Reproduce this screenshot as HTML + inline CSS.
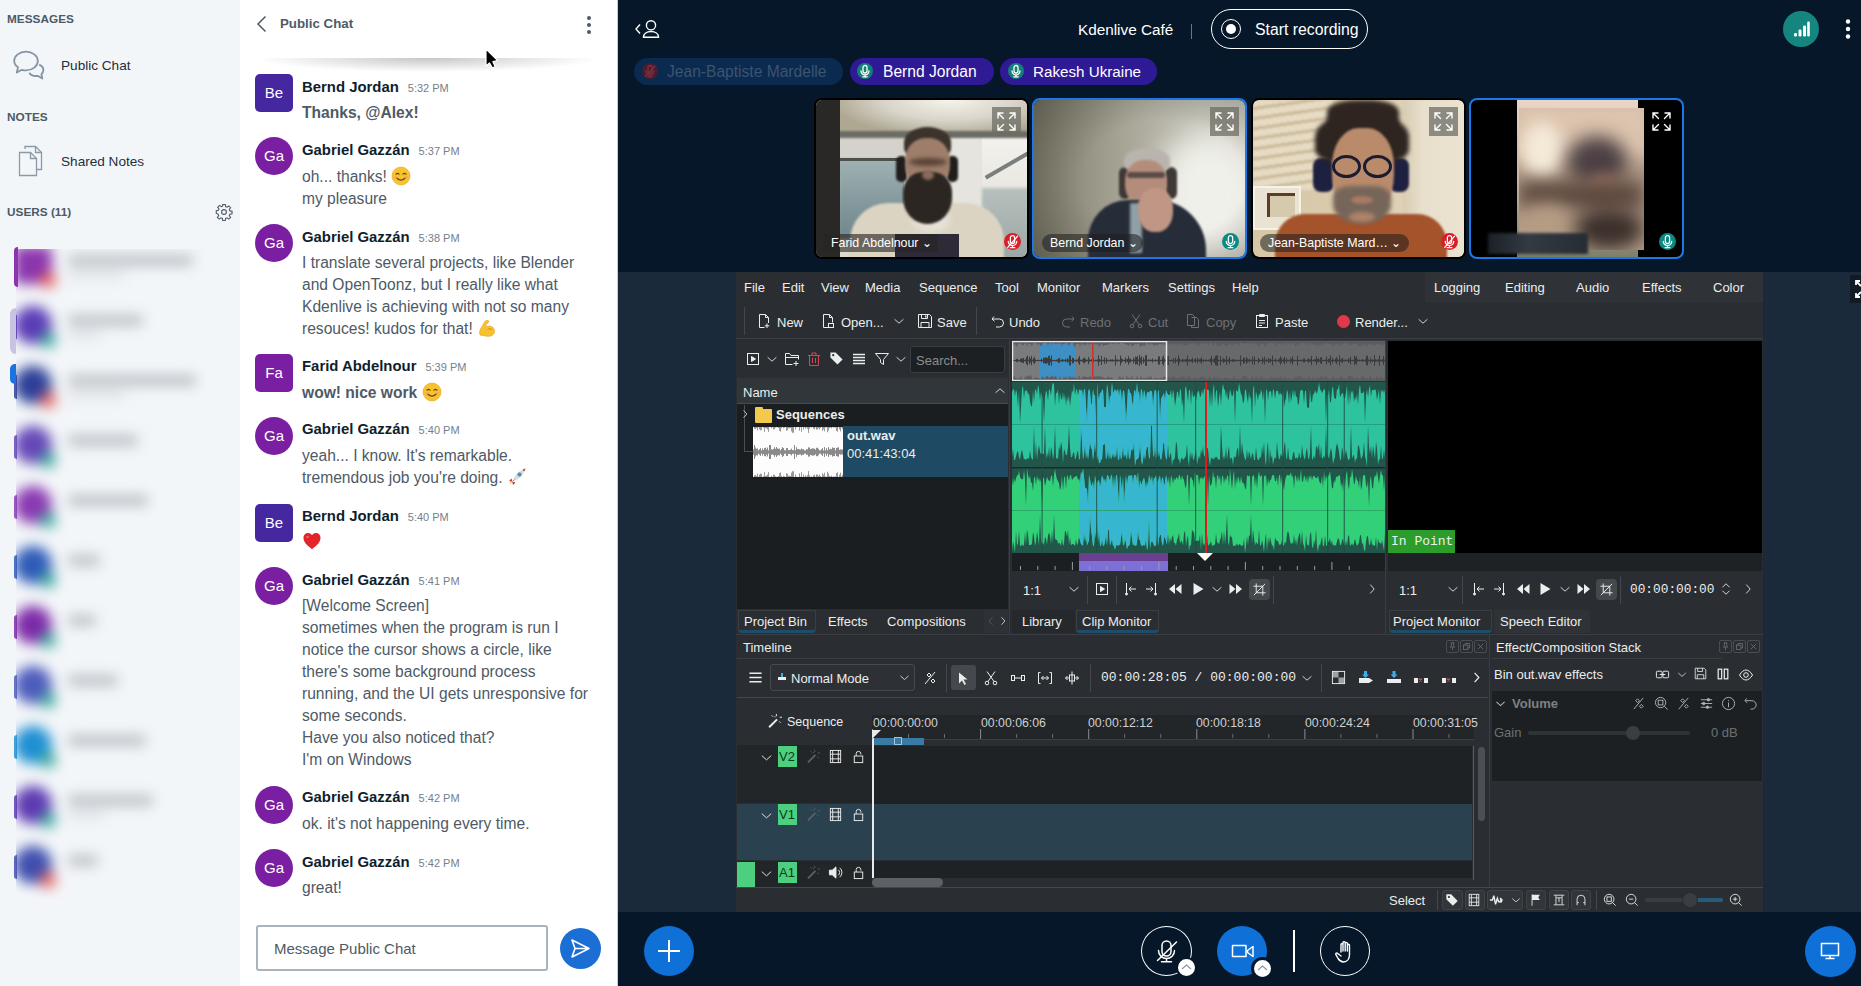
<!DOCTYPE html>
<html><head><meta charset="utf-8">
<style>
*{box-sizing:border-box;margin:0;padding:0}
html,body{width:1861px;height:986px;overflow:hidden;font-family:"Liberation Sans",sans-serif;background:#06172a}
.abs{position:absolute}
#side{position:absolute;left:0;top:0;width:240px;height:986px;background:#f3f6f9}
.sh{position:absolute;left:7px;font-size:11.8px;font-weight:bold;color:#4e5a66;letter-spacing:0px}
.si{position:absolute;left:61px;font-size:13.6px;color:#1f2e3d}
#chat{position:absolute;left:240px;top:0;width:378px;height:986px;background:#fff;border-right:1px solid #c6ccd2}
.t{position:absolute;white-space:nowrap;line-height:1}
.av{position:absolute;left:15px;width:38px;height:38px;color:#fff;font-size:15px;text-align:center;line-height:38px}
.sq{border-radius:5px;background:#4527a0}
.ci{border-radius:50%;background:#7b1fa2}
.nm{position:absolute;left:62px;font-size:14.9px;font-weight:bold;color:#0f1e2d;white-space:nowrap;line-height:1}
.tm{font-size:11px;font-weight:normal;color:#75808a;margin-left:9px}
.ms{position:absolute;left:62px;font-size:15.6px;color:#4e5a66;white-space:nowrap;line-height:22px}
#main{position:absolute;left:618px;top:0;width:1243px;height:986px;background:#06172a}
</style></head><body>
<div id="side">
  <div class="sh" style="top:12px">MESSAGES</div>
  <svg class="abs" style="left:12px;top:49px" width="34" height="32" viewBox="0 0 34 32" fill="none" stroke="#8495a5" stroke-width="1.8" stroke-linejoin="round">
    <path d="M6 18.2C3.5 16.5 2.2 14.3 2.2 12 2.2 6.8 7.5 2.6 14 2.6S25.8 6.8 25.8 12 20.5 21.4 14 21.4c-1.5 0-2.9-.2-4.2-.6L4.8 23.5z"/>
    <path d="M27.2 15.6c2.5 1.1 4.2 3.1 4.2 5.5 0 1.6-.8 3-2 4.1l.9 4.3-4.6-2.7c-.6.1-1.2.2-1.9.2-2.9 0-5.4-1.3-6.5-3.3"/>
  </svg>
  <div class="si" style="top:58px">Public Chat</div>
  <div class="sh" style="top:110px">NOTES</div>
  <svg class="abs" style="left:18px;top:145px" width="27" height="32" viewBox="0 0 27 32" fill="none" stroke="#8c9aa8" stroke-width="1.3">
    <path d="M7 4V1.5h10.5l6 6V24.5H19"/>
    <path d="M17.5 1.5v6h6"/>
    <path d="M1.5 7.5h11l6 6v17h-17z"/>
    <path d="M12.5 7.5v6h6"/>
  </svg>
  <div class="si" style="top:154px">Shared Notes</div>
  <div class="sh" style="top:205px">USERS (11)</div>
  <svg class="abs" style="left:215px;top:203px" width="18" height="18" viewBox="0 0 24 24" fill="none" stroke="#4e5a66" stroke-width="1.5">
    <circle cx="12" cy="12" r="3.2"/>
    <path d="M10.3 2h3.4l.5 2.8 1.8.8 2.4-1.7 2.4 2.4-1.7 2.4.8 1.8 2.8.5v3.4l-2.8.5-.8 1.8 1.7 2.4-2.4 2.4-2.4-1.7-1.8.8-.5 2.8h-3.4l-.5-2.8-1.8-.8-2.4 1.7-2.4-2.4 1.7-2.4-.8-1.8L1.7 13.7v-3.4l2.8-.5.8-1.8-1.7-2.4 2.4-2.4 2.4 1.7 1.8-.8z"/>
  </svg>
  <div class="abs" style="left:14px;top:247px;width:4px;height:40px;background:#8b35ad;border-radius:6px 0 0 6px"></div><div class="abs" style="left:14px;top:315px;width:3px;height:24px;background:#5b3cb6;border-radius:3px 0 0 3px;opacity:.85"></div><div class="abs" style="left:14px;top:375px;width:3px;height:24px;background:#2d3f98;border-radius:3px 0 0 3px;opacity:.85"></div><div class="abs" style="left:14px;top:435px;width:3px;height:24px;background:#6548b8;border-radius:3px 0 0 3px;opacity:.85"></div><div class="abs" style="left:14px;top:495px;width:3px;height:24px;background:#8a3ab2;border-radius:3px 0 0 3px;opacity:.85"></div><div class="abs" style="left:14px;top:555px;width:3px;height:24px;background:#2f5bb8;border-radius:3px 0 0 3px;opacity:.85"></div><div class="abs" style="left:14px;top:615px;width:3px;height:24px;background:#7d2aa8;border-radius:3px 0 0 3px;opacity:.85"></div><div class="abs" style="left:14px;top:675px;width:3px;height:24px;background:#4d5cbc;border-radius:3px 0 0 3px;opacity:.85"></div><div class="abs" style="left:14px;top:735px;width:3px;height:24px;background:#1e8fd2;border-radius:3px 0 0 3px;opacity:.85"></div><div class="abs" style="left:14px;top:795px;width:3px;height:24px;background:#5d3ab2;border-radius:3px 0 0 3px;opacity:.85"></div><div class="abs" style="left:14px;top:855px;width:3px;height:24px;background:#3f4fae;border-radius:3px 0 0 3px;opacity:.85"></div><div class="abs" style="left:10px;top:308px;width:6px;height:46px;background:#c9c2e3;border-radius:8px 0 0 8px"></div><div class="abs" style="left:10px;top:364px;width:6px;height:20px;background:#1a73e0;border-radius:5px 0 0 5px"></div><div class="abs" style="left:16px;top:249px;width:224px;height:651px;overflow:hidden"><div class="abs" style="left:0;top:0;width:224px;height:651px;filter:blur(6.5px)"><div class="abs" style="left:-2px;top:-3px;width:38px;height:38px;border-radius:6px;background:#8b35ad"></div><div class="abs" style="left:24px;top:23px;width:16px;height:16px;border-radius:50%;background:#e8605c"></div><div class="abs" style="left:52px;top:6px;width:125px;height:11px;background:#bcc0c5;border-radius:4px"></div><div class="abs" style="left:52px;top:23px;width:56px;height:6px;background:#d6dadf;border-radius:3px"></div><div class="abs" style="left:-2px;top:57px;width:38px;height:38px;border-radius:50%;background:#5b3cb6"></div><div class="abs" style="left:24px;top:83px;width:16px;height:16px;border-radius:50%;background:#3aa89a"></div><div class="abs" style="left:52px;top:66px;width:75px;height:11px;background:#bcc0c5;border-radius:4px"></div><div class="abs" style="left:52px;top:83px;width:33px;height:6px;background:#d6dadf;border-radius:3px"></div><div class="abs" style="left:-2px;top:117px;width:38px;height:38px;border-radius:50%;background:#2d3f98"></div><div class="abs" style="left:24px;top:143px;width:16px;height:16px;border-radius:50%;background:#e8605c"></div><div class="abs" style="left:52px;top:126px;width:128px;height:11px;background:#bcc0c5;border-radius:4px"></div><div class="abs" style="left:52px;top:143px;width:57px;height:6px;background:#d6dadf;border-radius:3px"></div><div class="abs" style="left:-2px;top:177px;width:38px;height:38px;border-radius:50%;background:#6548b8"></div><div class="abs" style="left:24px;top:203px;width:16px;height:16px;border-radius:50%;background:#3aa89a"></div><div class="abs" style="left:52px;top:186px;width:70px;height:11px;background:#bcc0c5;border-radius:4px"></div><div class="abs" style="left:-2px;top:237px;width:38px;height:38px;border-radius:50%;background:#8a3ab2"></div><div class="abs" style="left:24px;top:263px;width:16px;height:16px;border-radius:50%;background:#3aa89a"></div><div class="abs" style="left:52px;top:246px;width:80px;height:11px;background:#bcc0c5;border-radius:4px"></div><div class="abs" style="left:-2px;top:297px;width:38px;height:38px;border-radius:50%;background:#2f5bb8"></div><div class="abs" style="left:24px;top:323px;width:16px;height:16px;border-radius:50%;background:#3aa89a"></div><div class="abs" style="left:52px;top:306px;width:32px;height:11px;background:#bcc0c5;border-radius:4px"></div><div class="abs" style="left:-2px;top:357px;width:38px;height:38px;border-radius:50%;background:#7d2aa8"></div><div class="abs" style="left:24px;top:383px;width:16px;height:16px;border-radius:50%;background:#3aa89a"></div><div class="abs" style="left:52px;top:366px;width:28px;height:11px;background:#bcc0c5;border-radius:4px"></div><div class="abs" style="left:-2px;top:417px;width:38px;height:38px;border-radius:50%;background:#4d5cbc"></div><div class="abs" style="left:24px;top:443px;width:16px;height:16px;border-radius:50%;background:#3aa89a"></div><div class="abs" style="left:52px;top:426px;width:50px;height:11px;background:#bcc0c5;border-radius:4px"></div><div class="abs" style="left:-2px;top:477px;width:38px;height:38px;border-radius:50%;background:#1e8fd2"></div><div class="abs" style="left:24px;top:503px;width:16px;height:16px;border-radius:50%;background:#3aa89a"></div><div class="abs" style="left:52px;top:486px;width:78px;height:11px;background:#bcc0c5;border-radius:4px"></div><div class="abs" style="left:-2px;top:537px;width:38px;height:38px;border-radius:50%;background:#5d3ab2"></div><div class="abs" style="left:24px;top:563px;width:16px;height:16px;border-radius:50%;background:#3aa89a"></div><div class="abs" style="left:52px;top:546px;width:85px;height:11px;background:#bcc0c5;border-radius:4px"></div><div class="abs" style="left:52px;top:563px;width:38px;height:6px;background:#d6dadf;border-radius:3px"></div><div class="abs" style="left:-2px;top:597px;width:38px;height:38px;border-radius:50%;background:#3f4fae"></div><div class="abs" style="left:24px;top:623px;width:16px;height:16px;border-radius:50%;background:#e8605c"></div><div class="abs" style="left:52px;top:606px;width:30px;height:11px;background:#bcc0c5;border-radius:4px"></div></div></div></div>
</div>

<div id="chat">
  <svg class="abs" style="left:16px;top:15px" width="12" height="18" viewBox="0 0 12 18" fill="none" stroke="#4e5a66" stroke-width="1.5"><path d="M9.5 1.5L2 9l7.5 7.5"/></svg>
  <div class="t" style="left:40px;top:17px;font-size:13.3px;font-weight:bold;color:#4e5a66">Public Chat</div>
  <svg class="abs" style="left:345px;top:15px" width="8" height="20" viewBox="0 0 8 20" fill="#4e5a66"><circle cx="4" cy="3" r="2"/><circle cx="4" cy="10" r="2"/><circle cx="4" cy="17" r="2"/></svg>
  <div class="abs" style="left:15px;top:58px;width:345px;height:14px;background:radial-gradient(ellipse 50% 100% at 50% 0%,rgba(0,0,0,.22),rgba(0,0,0,0) 100%)"></div>

  <div class="av sq" style="top:74px">Be</div>
  <div class="nm" style="top:80px">Bernd Jordan<span class="tm">5:32 PM</span></div>
  <div class="ms" style="top:102px;font-weight:bold">Thanks, @Alex!</div>

  <div class="av ci" style="top:137px">Ga</div>
  <div class="nm" style="top:143px">Gabriel Gazzán<span class="tm">5:37 PM</span></div>
  <div class="ms" style="top:166px">oh... thanks! <svg width="20" height="20" viewBox="0 0 20 20" style="vertical-align:-4px"><circle cx="10" cy="10" r="9" fill="#f7c22e"/><circle cx="10" cy="10" r="9" fill="none" stroke="#e8a317" stroke-width=".6"/><path d="M5 8.2q1.5-1.6 3 0M12 8.2q1.5-1.6 3 0" stroke="#6b4513" stroke-width="1.2" fill="none" stroke-linecap="round"/><ellipse cx="4.8" cy="11.3" rx="1.8" ry="1.1" fill="#f59a8a" opacity=".8"/><ellipse cx="15.2" cy="11.3" rx="1.8" ry="1.1" fill="#f59a8a" opacity=".8"/><path d="M6 12.2q4 3.8 8 0" stroke="#6b4513" stroke-width="1.2" fill="none" stroke-linecap="round"/></svg><br>my pleasure</div>

  <div class="av ci" style="top:224px">Ga</div>
  <div class="nm" style="top:230px">Gabriel Gazzán<span class="tm">5:38 PM</span></div>
  <div class="ms" style="top:252px">I translate several projects, like Blender<br>and OpenToonz, but I really like what<br>Kdenlive is achieving with not so many<br>resouces! kudos for that! <svg width="20" height="20" viewBox="0 0 20 20" style="vertical-align:-4px"><path d="M3 17c-1-3 0-6 2-8.5L7.5 4c.8-1.4 2.5-2.2 3.8-1.4.8.5.6 1.6-.2 2.2L9 6.5l.5 2.5c1.5-1.2 4-1.5 6 0 2 1.6 2.6 4.3 1.5 6.5-1.2 2.2-4 3-7 2.8z" fill="#f7c22e" stroke="#e0a020" stroke-width=".6"/><path d="M10.5 11.5c1.5-1 3.5-1 4.8.5" stroke="#d08a10" stroke-width=".9" fill="none"/></svg></div>

  <div class="av sq" style="top:354px;background:#7b1fa2">Fa</div>
  <div class="nm" style="top:359px">Farid Abdelnour<span class="tm">5:39 PM</span></div>
  <div class="ms" style="top:382px;font-weight:bold">wow! nice work <svg width="20" height="20" viewBox="0 0 20 20" style="vertical-align:-4px"><circle cx="10" cy="10" r="9" fill="#f7c22e"/><circle cx="10" cy="10" r="9" fill="none" stroke="#e8a317" stroke-width=".6"/><path d="M5 8.2q1.5-1.6 3 0M12 8.2q1.5-1.6 3 0" stroke="#6b4513" stroke-width="1.2" fill="none" stroke-linecap="round"/><ellipse cx="4.8" cy="11.3" rx="1.8" ry="1.1" fill="#f59a8a" opacity=".8"/><ellipse cx="15.2" cy="11.3" rx="1.8" ry="1.1" fill="#f59a8a" opacity=".8"/><path d="M6 12.2q4 3.8 8 0" stroke="#6b4513" stroke-width="1.2" fill="none" stroke-linecap="round"/></svg></div>

  <div class="av ci" style="top:417px">Ga</div>
  <div class="nm" style="top:422px">Gabriel Gazzán<span class="tm">5:40 PM</span></div>
  <div class="ms" style="top:445px">yeah... I know. It's remarkable.<br>tremendous job you're doing. <svg width="20" height="20" viewBox="0 0 20 20" style="vertical-align:-4px"><path d="M4.5 11.5L2 14l3.5.8z M8.5 15.5L6 18l-.8-3.5z" fill="#c43a30"/><path d="M5.5 14.5C7 9 11 4 18.5 1.5 16 9 11 13 5.5 14.5z" fill="#d6dde3"/><path d="M5.5 14.5l2-2" stroke="#8a9aa8" stroke-width="1"/><circle cx="12.5" cy="7.5" r="1.8" fill="#4a90c8" stroke="#6a7a88" stroke-width=".6"/><path d="M18.5 1.5c-1 .3-2 .7-3 1.2l1.8 1.8c.5-1 .9-2 1.2-3z" fill="#c43a30"/><path d="M5.5 14.5L3 17.5l.8-3.2z" fill="#f5a623"/></svg></div>

  <div class="av sq" style="top:504px">Be</div>
  <div class="nm" style="top:509px">Bernd Jordan<span class="tm">5:40 PM</span></div>
  <div class="ms" style="top:531px"><svg width="20" height="20" viewBox="0 0 20 20" style="vertical-align:-4px"><path d="M10 18.2C4.5 14 1.5 10.8 1.5 6.8 1.5 4 3.6 2 6.1 2c1.7 0 3 .9 3.9 2.3C10.9 2.9 12.2 2 13.9 2c2.5 0 4.6 2 4.6 4.8 0 4-3 7.2-8.5 11.4z" fill="#e3242b"/><ellipse cx="5.5" cy="6" rx="1.6" ry="1" fill="#ff8a8a" opacity=".6"/></svg></div>

  <div class="av ci" style="top:567px">Ga</div>
  <div class="nm" style="top:573px">Gabriel Gazzán<span class="tm">5:41 PM</span></div>
  <div class="ms" style="top:595px">[Welcome Screen]<br>sometimes when the program is run I<br>notice the cursor shows a circle, like<br>there's some background process<br>running, and the UI gets unresponsive for<br>some seconds.<br>Have you also noticed that?<br>I'm on Windows</div>

  <div class="av ci" style="top:786px">Ga</div>
  <div class="nm" style="top:790px">Gabriel Gazzán<span class="tm">5:42 PM</span></div>
  <div class="ms" style="top:813px">ok. it's not happening every time.</div>

  <div class="av ci" style="top:849px">Ga</div>
  <div class="nm" style="top:855px">Gabriel Gazzán<span class="tm">5:42 PM</span></div>
  <div class="ms" style="top:877px">great!</div>

  <div class="abs" style="left:16px;top:925px;width:292px;height:46px;border:2px solid #a7b3bd;border-radius:3px"></div>
  <div class="t" style="left:34px;top:941px;font-size:15px;color:#4e5a66">Message Public Chat</div>
  <div class="abs" style="left:320px;top:928px;width:41px;height:41px;border-radius:50%;background:#1b6fd4"></div>
  <svg class="abs" style="left:329px;top:937px" width="23" height="23" viewBox="0 0 23 23" fill="none" stroke="#fff" stroke-width="1.6" stroke-linejoin="round"><path d="M3 3l17 8.5L3 20l3-8.5z M6 11.5h14"/></svg>
</div>


<div id="main">
</div>
<!-- TOP BAR -->
<svg class="abs" style="left:633px;top:19px" width="28" height="20" viewBox="0 0 28 20" fill="none" stroke="#fff" stroke-width="1.4">
  <path d="M7 5.5L3 10l4 4.5"/>
  <circle cx="18" cy="6.3" r="4.6"/>
  <path d="M10.5 18.3c0-3.6 3.3-5.8 7.5-5.8s7.5 2.2 7.5 5.8z"/>
</svg>
<div class="t" style="left:1078px;top:22px;font-size:15.3px;color:#fff">Kdenlive Café</div>
<div class="abs" style="left:1191px;top:24px;width:1px;height:15px;background:#6b7785"></div>
<div class="abs" style="left:1211px;top:9px;width:157px;height:40px;border:1.5px solid #fff;border-radius:20px"></div>
<div class="abs" style="left:1221px;top:19px;width:20px;height:20px;border:1.6px solid #fff;border-radius:50%"></div>
<div class="abs" style="left:1226px;top:24px;width:10px;height:10px;background:#fff;border-radius:50%"></div>
<div class="t" style="left:1255px;top:22px;font-size:15.8px;color:#fff">Start recording</div>
<div class="abs" style="left:1783px;top:11px;width:36px;height:36px;border-radius:50%;background:#15857f"></div>
<svg class="abs" style="left:1791px;top:19px" width="20" height="20" viewBox="0 0 20 20" fill="#fff">
  <rect x="3" y="14" width="3" height="3.5" rx="1.2"/><rect x="7.5" y="10.5" width="3" height="7" rx="1.2"/><rect x="12" y="6.5" width="3" height="11" rx="1.2"/><rect x="16.2" y="2.5" width="2.6" height="15" rx="1.2"/>
</svg>
<svg class="abs" style="left:1844px;top:18px" width="8" height="22" viewBox="0 0 8 22" fill="#fff"><circle cx="4" cy="3.5" r="2.2"/><circle cx="4" cy="11" r="2.2"/><circle cx="4" cy="18.5" r="2.2"/></svg>

<!-- TALKING PILLS -->
<div class="abs" style="left:634px;top:58px;width:209px;height:27px;border-radius:14px;background:#0b2a4f"></div>
<div class="abs" style="left:642px;top:63px;width:16px;height:16px;border-radius:50%;background:#4a1d30"></div><svg class="abs" style="left:642px;top:63px" width="16" height="16" viewBox="0 0 16 16" fill="none" stroke="#7a3040" stroke-width="1.3" stroke-linecap="round"><rect x="6" y="2.5" width="4" height="7.5" rx="2"/><path d="M4 7.8c0 2.3 1.8 4 4 4s4-1.7 4-4M8 11.8v2M5.8 13.8h4.4"/><path d="M3.5 13.5L12.8 3"/></svg>
<div class="t" style="left:667px;top:64px;font-size:15.6px;color:#3b5470">Jean-Baptiste Mardelle</div>
<div class="abs" style="left:850px;top:58px;width:144px;height:27px;border-radius:14px;background:#2f1a96"></div>
<div class="abs" style="left:857px;top:63px;width:16px;height:16px;border-radius:50%;background:#138077"></div><svg class="abs" style="left:857px;top:63px" width="16" height="16" viewBox="0 0 16 16" fill="none" stroke="#fff" stroke-width="1.3" stroke-linecap="round"><rect x="6" y="2.5" width="4" height="7.5" rx="2"/><path d="M4 7.8c0 2.3 1.8 4 4 4s4-1.7 4-4M8 11.8v2M5.8 13.8h4.4"/></svg>
<div class="t" style="left:883px;top:64px;font-size:15.6px;color:#fff">Bernd Jordan</div>
<div class="abs" style="left:1000px;top:58px;width:157px;height:27px;border-radius:14px;background:#2f1a96"></div>
<div class="abs" style="left:1008px;top:63px;width:16px;height:16px;border-radius:50%;background:#138077"></div><svg class="abs" style="left:1008px;top:63px" width="16" height="16" viewBox="0 0 16 16" fill="none" stroke="#fff" stroke-width="1.3" stroke-linecap="round"><rect x="6" y="2.5" width="4" height="7.5" rx="2"/><path d="M4 7.8c0 2.3 1.8 4 4 4s4-1.7 4-4M8 11.8v2M5.8 13.8h4.4"/></svg>
<div class="t" style="left:1033px;top:64px;font-size:15.2px;color:#fff">Rakesh Ukraine</div>

<!-- VIDEO TILES -->

<style>
.tile{position:absolute;top:98px;width:215px;height:161px;border-radius:8px;overflow:hidden;border:2px solid #000;background-clip:padding-box!important}
.tile .b{position:absolute;border-radius:50%}
.exp{position:absolute;top:7px;right:6px;width:29px;height:29px;background:rgba(110,110,100,.75)}
.nl{position:absolute;bottom:5px;height:18px;border-radius:9px;background:rgba(30,30,30,.55);color:#fff;font-size:12.4px;line-height:19px;padding-left:8px;white-space:nowrap}
.mic{position:absolute;right:6px;bottom:7px;width:17px;height:17px;border-radius:50%}
</style>
<div class="tile" style="left:814px;background:#dcd9d0">
<div class="abs" style="left:0px;top:0px;width:215px;height:33px;background:radial-gradient(ellipse 55% 110% at 62% 0%,#f6f3ea,#d9d5ca 55%,#aea893);"></div>
<div class="abs" style="left:22px;top:38px;width:70px;height:22px;background:#d4d2ca;"></div>
<div class="abs" style="left:22px;top:59px;width:68px;height:80px;background:linear-gradient(#9fb2b3,#7d9296 70%,#6f868a);filter:blur(1.5px)"></div>
<div class="abs" style="left:22px;top:58px;width:68px;height:3px;background:#4e504e;filter:blur(.5px)"></div>
<div class="abs" style="left:88px;top:36px;width:50px;height:80px;background:#d8d6cf;"></div>
<div class="abs" style="left:136px;top:34px;width:31px;height:82px;background:#e6e4de;filter:blur(1px)"></div>
<div class="abs" style="left:166px;top:34px;width:49px;height:60px;background:linear-gradient(#f4f2ec,#e8e6e0);"></div>
<div class="abs" style="left:166px;top:88px;width:49px;height:73px;background:linear-gradient(#b6c0bd,#9aa6a4);filter:blur(1.5px)"></div>
<div class="abs" style="left:166px;top:62px;width:55px;height:4px;background:#7a7e7c;transform:rotate(-30deg);filter:blur(.6px)"></div>
<div class="abs" style="left:20px;top:31px;width:195px;height:7px;background:#6c6c66;filter:blur(.8px)"></div>
<div class="abs" style="left:0px;top:0px;width:24px;height:161px;background:#2a2826;filter:blur(.5px)"></div>
<div class="abs" style="left:34px;top:103px;width:154px;height:62px;background:#dbd4c2;border-radius:38px 38px 0 0;filter:blur(1px)"></div>
<div class="abs" style="left:96px;top:108px;width:38px;height:24px;background:#e6e2d6;border-radius:50%;filter:blur(3px)"></div>
<div class="abs" style="left:79px;top:134px;width:64px;height:27px;background:#2e2a38;filter:blur(.6px)"></div>
<div class="abs" style="left:80px;top:56px;width:11px;height:26px;background:#1f1e1d;border-radius:5px;filter:blur(1px)"></div>
<div class="abs" style="left:131px;top:56px;width:11px;height:26px;background:#1f1e1d;border-radius:5px;filter:blur(1px)"></div>
<div class="abs" style="left:88px;top:27px;width:47px;height:30px;background:#3c342c;border-radius:50% 50% 30% 30%;filter:blur(1.2px)"></div>
<div class="abs" style="left:89px;top:38px;width:45px;height:50px;background:#9e7d6a;border-radius:45%;filter:blur(1.2px)"></div>
<div class="abs" style="left:93px;top:58px;width:38px;height:8px;background:#5a4438;border-radius:50%;filter:blur(2px)"></div>
<div class="abs" style="left:87px;top:72px;width:49px;height:52px;background:#2c2622;border-radius:40% 40% 50% 50%;filter:blur(1.2px)"></div>
<div class="abs" style="left:106px;top:70px;width:12px;height:10px;background:#8a6a5a;border-radius:50%;filter:blur(1.5px)"></div>
<div class="exp"></div><svg class="abs" style="right:10px;top:11px" width="21" height="21" viewBox="0 0 21 21" fill="none" stroke="#fff" stroke-width="1.4" stroke-linecap="round"><path d="M2 7V2h5M2 2l5.5 5.5M14 2h5v5M19 2l-5.5 5.5M2 14v5h5M2 19l5.5-5.5M19 14v5h-5M19 19l-5.5-5.5"/></svg>
<div class="nl" style="left:7px;width:115px;border-radius:0;background:rgba(40,36,32,.62)">Farid Abdelnour ⌄</div>
<div class="mic" style="background:#d81e28"></div><svg class="abs" style="right:6px;bottom:7px" width="17" height="17" viewBox="0 0 16 16" fill="none" stroke="#fff" stroke-width="1.2" stroke-linecap="round"><rect x="6" y="2.5" width="4" height="7.5" rx="2"/><path d="M4 7.8c0 2.3 1.8 4 4 4s4-1.7 4-4M8 11.8v2M5.8 13.8h4.4"/><path d="M3.5 13.5L12.8 3"/></svg>
</div>
<div class="tile" style="left:1032px;border-color:#1c78e6;background:linear-gradient(90deg,#7e7c6c,#a9a798 45%,#cfcfc6)">
<div class="abs" style="left:120px;top:30px;width:110px;height:130px;background:#f0f0ea;border-radius:50%;filter:blur(16px)"></div>
<div class="abs" style="left:0px;top:0px;width:215px;height:161px;background:radial-gradient(ellipse 75% 75% at 60% 50%,rgba(0,0,0,0) 50%,rgba(40,40,30,.35));"></div>
<div class="abs" style="left:85px;top:67px;width:12px;height:32px;background:#3e3836;border-radius:6px;filter:blur(1px)"></div>
<div class="abs" style="left:131px;top:67px;width:12px;height:32px;background:#3e3836;border-radius:6px;filter:blur(1px)"></div>
<div class="abs" style="left:90px;top:48px;width:46px;height:24px;background:#b9b4ae;border-radius:50% 50% 30% 30%;filter:blur(1.5px)"></div>
<div class="abs" style="left:91px;top:60px;width:42px;height:46px;background:#b48c7c;border-radius:45%;filter:blur(1.2px)"></div>
<div class="abs" style="left:93px;top:72px;width:38px;height:6px;background:#5a4c48;border-radius:3px;filter:blur(1px)"></div>
<div class="abs" style="left:54px;top:100px;width:118px;height:64px;background:#262c38;border-radius:40px 50px 0 0;filter:blur(1px)"></div>
<div class="abs" style="left:96px;top:103px;width:12px;height:50px;background:#8fa0a6;filter:blur(1.5px)"></div>
<div class="abs" style="left:104px;top:88px;width:35px;height:44px;background:#c09684;border-radius:45%;filter:blur(1.2px)"></div>
<div class="exp"></div><svg class="abs" style="right:10px;top:11px" width="21" height="21" viewBox="0 0 21 21" fill="none" stroke="#fff" stroke-width="1.4" stroke-linecap="round"><path d="M2 7V2h5M2 2l5.5 5.5M14 2h5v5M19 2l-5.5 5.5M2 14v5h5M2 19l5.5-5.5M19 14v5h-5M19 19l-5.5-5.5"/></svg>
<div class="nl" style="left:8px;width:101px">Bernd Jordan ⌄</div>
<div class="mic" style="background:#0c8a82"></div><svg class="abs" style="right:6px;bottom:7px" width="17" height="17" viewBox="0 0 16 16" fill="none" stroke="#fff" stroke-width="1.2" stroke-linecap="round"><rect x="6" y="2.5" width="4" height="7.5" rx="2"/><path d="M4 7.8c0 2.3 1.8 4 4 4s4-1.7 4-4M8 11.8v2M5.8 13.8h4.4"/></svg>
</div>
<div class="tile" style="left:1251px;background:linear-gradient(90deg,#d6c6a6,#dccdb0 55%,#e4d9c2)">
<div class="abs" style="left:0px;top:0px;width:80px;height:90px;background:repeating-linear-gradient(172deg,#e9dec8 0 7px,#c9b898 7px 10px);opacity:.85;filter:blur(.8px)"></div>
<div class="abs" style="left:150px;top:0px;width:65px;height:161px;background:linear-gradient(90deg,#d8ccb2,#e8e0cc 30%,#ece4d2);filter:blur(1px)"></div>
<div class="abs" style="left:0px;top:86px;width:48px;height:44px;background:#ebe3d2;border:2px solid #f6f2e8;filter:blur(.5px)"></div>
<div class="abs" style="left:14px;top:93px;width:28px;height:24px;background:#d6caae;border-left:3px solid #5b3d28;border-top:3px solid #5b3d28;filter:blur(.5px)"></div>
<div class="abs" style="left:22px;top:114px;width:172px;height:50px;background:#a5532b;border-radius:30px 30px 0 0;filter:blur(1px)"></div>
<div class="abs" style="left:60px;top:58px;width:21px;height:34px;background:#1e2040;border-radius:8px;filter:blur(1px)"></div>
<div class="abs" style="left:136px;top:58px;width:20px;height:34px;background:#1e2040;border-radius:8px;filter:blur(1px)"></div>
<div class="abs" style="left:62px;top:14px;width:94px;height:50px;background:#2e2520;border-radius:45% 45% 30% 30%;filter:blur(2px)"></div><div class="abs" style="left:74px;top:0px;width:72px;height:30px;background:#2e2520;border-radius:40% 40% 20% 20%;filter:blur(2px)"></div>
<div class="abs" style="left:79px;top:28px;width:62px;height:90px;background:#b98b6b;border-radius:42% 42% 48% 48%;filter:blur(1.2px)"></div>
<div class="abs" style="left:80px;top:86px;width:58px;height:38px;background:#76665a;border-radius:30% 30% 50% 50%;filter:blur(2px)"></div>
<div class="abs" style="left:98px;top:96px;width:22px;height:8px;background:#a87a64;border-radius:50%;filter:blur(1.5px)"></div>
<div class="abs" style="left:79px;top:55px;width:29px;height:23px;background:rgba(0,0,0,0);border:3px solid #1a1c30;border-radius:50%;filter:blur(.5px)"></div>
<div class="abs" style="left:110px;top:55px;width:29px;height:23px;background:rgba(0,0,0,0);border:3px solid #1a1c30;border-radius:50%;filter:blur(.5px)"></div>
<div class="abs" style="left:96px;top:112px;width:26px;height:10px;background:#b08468;border-radius:50%;filter:blur(2px)"></div>
<div class="exp"></div><svg class="abs" style="right:10px;top:11px" width="21" height="21" viewBox="0 0 21 21" fill="none" stroke="#fff" stroke-width="1.4" stroke-linecap="round"><path d="M2 7V2h5M2 2l5.5 5.5M14 2h5v5M19 2l-5.5 5.5M2 14v5h5M2 19l5.5-5.5M19 14v5h-5M19 19l-5.5-5.5"/></svg>
<div class="nl" style="left:7px;width:149px">Jean-Baptiste Mard…  ⌄</div>
<div class="mic" style="background:#d81e28"></div><svg class="abs" style="right:6px;bottom:7px" width="17" height="17" viewBox="0 0 16 16" fill="none" stroke="#fff" stroke-width="1.2" stroke-linecap="round"><rect x="6" y="2.5" width="4" height="7.5" rx="2"/><path d="M4 7.8c0 2.3 1.8 4 4 4s4-1.7 4-4M8 11.8v2M5.8 13.8h4.4"/><path d="M3.5 13.5L12.8 3"/></svg>
</div>
<div class="tile" style="left:1469px;border-color:#1c78e6;background:#000">
<div class="abs" style="left:46px;top:0px;width:121px;height:161px;background:linear-gradient(#ead6c6,#c8b4a0 50%,#7a7c68);"></div>
<div class="abs" style="left:48px;top:8px;width:125px;height:142px;overflow:hidden;background:#b39c88">
<div class="abs" style="left:-10px;top:-10px;width:145px;height:60px;background:#dcc4ae;filter:blur(8px)"></div>
<div class="abs" style="left:2px;top:14px;width:42px;height:58px;background:#f4ead8;border-radius:50%;filter:blur(8px)"></div>
<div class="abs" style="left:48px;top:28px;width:60px;height:50px;background:#4c4044;border-radius:50%;filter:blur(9px)"></div>
<div class="abs" style="left:68px;top:68px;width:32px;height:32px;background:#b07e6c;border-radius:50%;filter:blur(7px)"></div>
<div class="abs" style="left:0px;top:72px;width:125px;height:30px;background:#5e4a40;filter:blur(9px)"></div>
<div class="abs" style="left:0px;top:96px;width:55px;height:46px;background:#b49c84;border-radius:50%;filter:blur(9px)"></div>
<div class="abs" style="left:55px;top:100px;width:70px;height:42px;background:#3c302c;border-radius:50%;filter:blur(9px)"></div>
</div>
<div class="abs" style="left:17px;top:133px;width:100px;height:21px;background:linear-gradient(90deg,#1a2026,#343a42 40%,#262c34);filter:blur(1.5px)"></div>
<svg class="abs" style="right:10px;top:11px" width="21" height="21" viewBox="0 0 21 21" fill="none" stroke="#fff" stroke-width="1.4" stroke-linecap="round"><path d="M2 7V2h5M2 2l5.5 5.5M14 2h5v5M19 2l-5.5 5.5M2 14v5h5M2 19l5.5-5.5M19 14v5h-5M19 19l-5.5-5.5"/></svg>
<div class="mic" style="background:#0c8a82"></div><svg class="abs" style="right:6px;bottom:7px" width="17" height="17" viewBox="0 0 16 16" fill="none" stroke="#fff" stroke-width="1.2" stroke-linecap="round"><rect x="6" y="2.5" width="4" height="7.5" rx="2"/><path d="M4 7.8c0 2.3 1.8 4 4 4s4-1.7 4-4M8 11.8v2M5.8 13.8h4.4"/></svg>
</div>
<!-- SCREENSHARE -->
<div class="abs" style="left:618px;top:272px;width:1243px;height:640px;background:#1b2a3a"></div>
<div class="abs" style="left:736px;top:272px;width:1027px;height:640px;background:#2a2e32"></div>
<div id="kdc" style="position:absolute;left:0;top:0;font-size:13px;color:#eceded">
<!-- menu bar -->
<div class="t" style="left:744px;top:281px">File</div>
<div class="t" style="left:782px;top:281px">Edit</div>
<div class="t" style="left:821px;top:281px">View</div>
<div class="t" style="left:865px;top:281px">Media</div>
<div class="t" style="left:919px;top:281px">Sequence</div>
<div class="t" style="left:995px;top:281px">Tool</div>
<div class="t" style="left:1037px;top:281px">Monitor</div>
<div class="t" style="left:1102px;top:281px">Markers</div>
<div class="t" style="left:1168px;top:281px">Settings</div>
<div class="t" style="left:1232px;top:281px">Help</div>
<div class="abs" style="left:1425px;top:272px;width:338px;height:30px;background:#2f3337"></div>
<div class="t" style="left:1434px;top:281px">Logging</div>
<div class="t" style="left:1505px;top:281px">Editing</div>
<div class="t" style="left:1576px;top:281px">Audio</div>
<div class="t" style="left:1642px;top:281px">Effects</div>
<div class="t" style="left:1713px;top:281px">Color</div>
<!-- main toolbar -->
<div class="abs" style="left:744px;top:307px;width:1px;height:28px;background:#44484c"></div>
<div class="abs" style="left:976px;top:307px;width:1px;height:28px;background:#44484c"></div>
<div class="t" style="left:777px;top:316px">New</div>
<div class="t" style="left:841px;top:316px">Open...</div>
<div class="t" style="left:937px;top:316px">Save</div>
<div class="t" style="left:1009px;top:316px">Undo</div>
<div class="t" style="left:1080px;top:316px;color:#6d7074">Redo</div>
<div class="t" style="left:1148px;top:316px;color:#6d7074">Cut</div>
<div class="t" style="left:1206px;top:316px;color:#6d7074">Copy</div>
<div class="t" style="left:1275px;top:316px">Paste</div>
<div class="abs" style="left:1337px;top:315px;width:13px;height:13px;border-radius:50%;background:#e0394a"></div>
<div class="t" style="left:1355px;top:316px">Render...</div>
<div class="abs" style="left:736px;top:338px;width:1027px;height:1px;background:#3c4044"></div>

<!-- project bin -->
<div class="abs" style="left:910px;top:346px;width:95px;height:27px;background:#1d2023;border:1px solid #3a3e42;border-radius:3px"></div>
<div class="t" style="left:916px;top:354px;color:#8a8d90">Search...</div>
<div class="abs" style="left:737px;top:378px;width:271px;height:26px;background:#31363b;border-bottom:1px solid #484c50"></div>
<div class="t" style="left:743px;top:386px">Name</div>
<div class="abs" style="left:737px;top:404px;width:271px;height:205px;background:#1b1e20"></div>
<div class="abs" style="left:843px;top:426px;width:165px;height:51px;background:#1f4a63"></div>
<div class="abs" style="left:755px;top:409px;width:17px;height:14px;background:#f2c94c;border-radius:1px"></div>
<div class="abs" style="left:755px;top:407px;width:8px;height:4px;background:#f2c94c;border-radius:1px"></div>
<div class="t" style="left:776px;top:408px;font-weight:bold">Sequences</div>
<div class="abs" style="left:744px;top:405px;width:1px;height:46px;background:#4a4e52"></div>
<div class="abs" style="left:744px;top:451px;width:9px;height:1px;background:#4a4e52"></div>
<svg class="abs" style="left:753px;top:427px" width="90" height="50" viewBox="0 0 90 50"><rect width="90" height="50" fill="#fdfdfd"/><rect x="0" y="22.4" width="1" height="5.2" fill="#8a8a8a"/><rect x="0" y="0" width="1" height="0.2" fill="#9a9a9a"/><rect x="0" y="49.8" width="1" height="0.2" fill="#9a9a9a"/><rect x="1" y="18.0" width="1" height="14.0" fill="#8a8a8a"/><rect x="1" y="0" width="1" height="1.7" fill="#9a9a9a"/><rect x="1" y="48.3" width="1" height="1.7" fill="#9a9a9a"/><rect x="2" y="20.5" width="1" height="9.0" fill="#8a8a8a"/><rect x="2" y="0" width="1" height="2.1" fill="#9a9a9a"/><rect x="2" y="47.9" width="1" height="2.1" fill="#9a9a9a"/><rect x="3" y="21.8" width="1" height="6.4" fill="#8a8a8a"/><rect x="3" y="0" width="1" height="1.0" fill="#9a9a9a"/><rect x="3" y="49.0" width="1" height="1.0" fill="#9a9a9a"/><rect x="4" y="21.4" width="1" height="7.1" fill="#8a8a8a"/><rect x="4" y="0" width="1" height="3.4" fill="#9a9a9a"/><rect x="4" y="46.6" width="1" height="3.4" fill="#9a9a9a"/><rect x="5" y="23.3" width="1" height="3.4" fill="#8a8a8a"/><rect x="5" y="0" width="1" height="0.1" fill="#9a9a9a"/><rect x="5" y="49.9" width="1" height="0.1" fill="#9a9a9a"/><rect x="6" y="22.2" width="1" height="5.5" fill="#8a8a8a"/><rect x="6" y="0" width="1" height="2.3" fill="#9a9a9a"/><rect x="6" y="47.7" width="1" height="2.3" fill="#9a9a9a"/><rect x="7" y="21.1" width="1" height="7.8" fill="#8a8a8a"/><rect x="7" y="0" width="1" height="3.5" fill="#9a9a9a"/><rect x="7" y="46.5" width="1" height="3.5" fill="#9a9a9a"/><rect x="8" y="23.4" width="1" height="3.2" fill="#8a8a8a"/><rect x="8" y="0" width="1" height="3.0" fill="#9a9a9a"/><rect x="8" y="47.0" width="1" height="3.0" fill="#9a9a9a"/><rect x="9" y="21.3" width="1" height="7.3" fill="#8a8a8a"/><rect x="9" y="0" width="1" height="0.1" fill="#9a9a9a"/><rect x="9" y="49.9" width="1" height="0.1" fill="#9a9a9a"/><rect x="10" y="23.0" width="1" height="4.0" fill="#8a8a8a"/><rect x="10" y="0" width="1" height="0.6" fill="#9a9a9a"/><rect x="10" y="49.4" width="1" height="0.6" fill="#9a9a9a"/><rect x="11" y="21.0" width="1" height="8.1" fill="#8a8a8a"/><rect x="11" y="0" width="1" height="4.8" fill="#9a9a9a"/><rect x="11" y="45.2" width="1" height="4.8" fill="#9a9a9a"/><rect x="12" y="20.6" width="1" height="8.8" fill="#8a8a8a"/><rect x="12" y="0" width="1" height="1.0" fill="#9a9a9a"/><rect x="12" y="49.0" width="1" height="1.0" fill="#9a9a9a"/><rect x="13" y="22.3" width="1" height="5.4" fill="#8a8a8a"/><rect x="13" y="0" width="1" height="1.3" fill="#9a9a9a"/><rect x="13" y="48.7" width="1" height="1.3" fill="#9a9a9a"/><rect x="14" y="20.5" width="1" height="9.0" fill="#8a8a8a"/><rect x="14" y="0" width="1" height="2.4" fill="#9a9a9a"/><rect x="14" y="47.6" width="1" height="2.4" fill="#9a9a9a"/><rect x="15" y="23.4" width="1" height="3.3" fill="#8a8a8a"/><rect x="15" y="0" width="1" height="4.9" fill="#9a9a9a"/><rect x="15" y="45.1" width="1" height="4.9" fill="#9a9a9a"/><rect x="16" y="18.0" width="1" height="14.0" fill="#8a8a8a"/><rect x="16" y="0" width="1" height="0.1" fill="#9a9a9a"/><rect x="16" y="49.9" width="1" height="0.1" fill="#9a9a9a"/><rect x="17" y="18.0" width="1" height="14.0" fill="#8a8a8a"/><rect x="17" y="0" width="1" height="0.1" fill="#9a9a9a"/><rect x="17" y="49.9" width="1" height="0.1" fill="#9a9a9a"/><rect x="18" y="22.3" width="1" height="5.5" fill="#8a8a8a"/><rect x="18" y="0" width="1" height="1.3" fill="#9a9a9a"/><rect x="18" y="48.7" width="1" height="1.3" fill="#9a9a9a"/><rect x="19" y="22.6" width="1" height="4.8" fill="#8a8a8a"/><rect x="19" y="0" width="1" height="0.1" fill="#9a9a9a"/><rect x="19" y="49.9" width="1" height="0.1" fill="#9a9a9a"/><rect x="20" y="22.0" width="1" height="6.1" fill="#8a8a8a"/><rect x="20" y="0" width="1" height="2.5" fill="#9a9a9a"/><rect x="20" y="47.5" width="1" height="2.5" fill="#9a9a9a"/><rect x="21" y="20.2" width="1" height="9.6" fill="#8a8a8a"/><rect x="21" y="0" width="1" height="2.1" fill="#9a9a9a"/><rect x="21" y="47.9" width="1" height="2.1" fill="#9a9a9a"/><rect x="22" y="21.8" width="1" height="6.3" fill="#8a8a8a"/><rect x="22" y="0" width="1" height="0.6" fill="#9a9a9a"/><rect x="22" y="49.4" width="1" height="0.6" fill="#9a9a9a"/><rect x="23" y="20.0" width="1" height="9.9" fill="#8a8a8a"/><rect x="23" y="0" width="1" height="0.1" fill="#9a9a9a"/><rect x="23" y="49.9" width="1" height="0.1" fill="#9a9a9a"/><rect x="24" y="21.4" width="1" height="7.1" fill="#8a8a8a"/><rect x="24" y="0" width="1" height="0.4" fill="#9a9a9a"/><rect x="24" y="49.6" width="1" height="0.4" fill="#9a9a9a"/><rect x="25" y="21.8" width="1" height="6.3" fill="#8a8a8a"/><rect x="25" y="0" width="1" height="1.0" fill="#9a9a9a"/><rect x="25" y="49.0" width="1" height="1.0" fill="#9a9a9a"/><rect x="26" y="21.6" width="1" height="6.9" fill="#8a8a8a"/><rect x="26" y="0" width="1" height="3.8" fill="#9a9a9a"/><rect x="26" y="46.2" width="1" height="3.8" fill="#9a9a9a"/><rect x="27" y="23.4" width="1" height="3.2" fill="#8a8a8a"/><rect x="27" y="0" width="1" height="4.6" fill="#9a9a9a"/><rect x="27" y="45.4" width="1" height="4.6" fill="#9a9a9a"/><rect x="28" y="21.9" width="1" height="6.1" fill="#8a8a8a"/><rect x="28" y="0" width="1" height="1.2" fill="#9a9a9a"/><rect x="28" y="48.8" width="1" height="1.2" fill="#9a9a9a"/><rect x="29" y="20.1" width="1" height="9.9" fill="#8a8a8a"/><rect x="29" y="0" width="1" height="0.0" fill="#9a9a9a"/><rect x="29" y="50.0" width="1" height="0.0" fill="#9a9a9a"/><rect x="30" y="21.0" width="1" height="8.0" fill="#8a8a8a"/><rect x="30" y="0" width="1" height="1.3" fill="#9a9a9a"/><rect x="30" y="48.7" width="1" height="1.3" fill="#9a9a9a"/><rect x="31" y="23.2" width="1" height="3.7" fill="#8a8a8a"/><rect x="31" y="0" width="1" height="0.8" fill="#9a9a9a"/><rect x="31" y="49.2" width="1" height="0.8" fill="#9a9a9a"/><rect x="32" y="23.4" width="1" height="3.2" fill="#8a8a8a"/><rect x="32" y="0" width="1" height="0.1" fill="#9a9a9a"/><rect x="32" y="49.9" width="1" height="0.1" fill="#9a9a9a"/><rect x="33" y="21.1" width="1" height="7.9" fill="#8a8a8a"/><rect x="33" y="0" width="1" height="3.8" fill="#9a9a9a"/><rect x="33" y="46.2" width="1" height="3.8" fill="#9a9a9a"/><rect x="34" y="21.0" width="1" height="8.1" fill="#8a8a8a"/><rect x="34" y="0" width="1" height="3.2" fill="#9a9a9a"/><rect x="34" y="46.8" width="1" height="3.2" fill="#9a9a9a"/><rect x="35" y="23.1" width="1" height="3.9" fill="#8a8a8a"/><rect x="35" y="0" width="1" height="1.3" fill="#9a9a9a"/><rect x="35" y="48.7" width="1" height="1.3" fill="#9a9a9a"/><rect x="36" y="23.1" width="1" height="3.8" fill="#8a8a8a"/><rect x="36" y="0" width="1" height="1.2" fill="#9a9a9a"/><rect x="36" y="48.8" width="1" height="1.2" fill="#9a9a9a"/><rect x="37" y="22.7" width="1" height="4.6" fill="#8a8a8a"/><rect x="37" y="0" width="1" height="1.0" fill="#9a9a9a"/><rect x="37" y="49.0" width="1" height="1.0" fill="#9a9a9a"/><rect x="38" y="21.6" width="1" height="6.8" fill="#8a8a8a"/><rect x="38" y="0" width="1" height="4.4" fill="#9a9a9a"/><rect x="38" y="45.6" width="1" height="4.4" fill="#9a9a9a"/><rect x="39" y="23.0" width="1" height="3.9" fill="#8a8a8a"/><rect x="39" y="0" width="1" height="5.7" fill="#9a9a9a"/><rect x="39" y="44.3" width="1" height="5.7" fill="#9a9a9a"/><rect x="40" y="23.2" width="1" height="3.5" fill="#8a8a8a"/><rect x="40" y="0" width="1" height="5.9" fill="#9a9a9a"/><rect x="40" y="44.1" width="1" height="5.9" fill="#9a9a9a"/><rect x="41" y="18.0" width="1" height="14.0" fill="#8a8a8a"/><rect x="41" y="0" width="1" height="0.0" fill="#9a9a9a"/><rect x="41" y="50.0" width="1" height="0.0" fill="#9a9a9a"/><rect x="42" y="23.2" width="1" height="3.7" fill="#8a8a8a"/><rect x="42" y="0" width="1" height="2.5" fill="#9a9a9a"/><rect x="42" y="47.5" width="1" height="2.5" fill="#9a9a9a"/><rect x="43" y="20.2" width="1" height="9.7" fill="#8a8a8a"/><rect x="43" y="0" width="1" height="0.2" fill="#9a9a9a"/><rect x="43" y="49.8" width="1" height="0.2" fill="#9a9a9a"/><rect x="44" y="22.0" width="1" height="5.9" fill="#8a8a8a"/><rect x="44" y="0" width="1" height="0.1" fill="#9a9a9a"/><rect x="44" y="49.9" width="1" height="0.1" fill="#9a9a9a"/><rect x="45" y="22.0" width="1" height="5.9" fill="#8a8a8a"/><rect x="45" y="0" width="1" height="0.0" fill="#9a9a9a"/><rect x="45" y="50.0" width="1" height="0.0" fill="#9a9a9a"/><rect x="46" y="22.4" width="1" height="5.1" fill="#8a8a8a"/><rect x="46" y="0" width="1" height="3.7" fill="#9a9a9a"/><rect x="46" y="46.3" width="1" height="3.7" fill="#9a9a9a"/><rect x="47" y="22.7" width="1" height="4.7" fill="#8a8a8a"/><rect x="47" y="0" width="1" height="0.2" fill="#9a9a9a"/><rect x="47" y="49.8" width="1" height="0.2" fill="#9a9a9a"/><rect x="48" y="21.4" width="1" height="7.2" fill="#8a8a8a"/><rect x="48" y="0" width="1" height="4.8" fill="#9a9a9a"/><rect x="48" y="45.2" width="1" height="4.8" fill="#9a9a9a"/><rect x="49" y="22.3" width="1" height="5.4" fill="#8a8a8a"/><rect x="49" y="0" width="1" height="0.0" fill="#9a9a9a"/><rect x="49" y="50.0" width="1" height="0.0" fill="#9a9a9a"/><rect x="50" y="22.2" width="1" height="5.7" fill="#8a8a8a"/><rect x="50" y="0" width="1" height="2.6" fill="#9a9a9a"/><rect x="50" y="47.4" width="1" height="2.6" fill="#9a9a9a"/><rect x="51" y="23.4" width="1" height="3.2" fill="#8a8a8a"/><rect x="51" y="0" width="1" height="0.4" fill="#9a9a9a"/><rect x="51" y="49.6" width="1" height="0.4" fill="#9a9a9a"/><rect x="52" y="23.5" width="1" height="3.0" fill="#8a8a8a"/><rect x="52" y="0" width="1" height="1.5" fill="#9a9a9a"/><rect x="52" y="48.5" width="1" height="1.5" fill="#9a9a9a"/><rect x="53" y="22.0" width="1" height="5.9" fill="#8a8a8a"/><rect x="53" y="0" width="1" height="0.3" fill="#9a9a9a"/><rect x="53" y="49.7" width="1" height="0.3" fill="#9a9a9a"/><rect x="54" y="22.3" width="1" height="5.3" fill="#8a8a8a"/><rect x="54" y="0" width="1" height="1.9" fill="#9a9a9a"/><rect x="54" y="48.1" width="1" height="1.9" fill="#9a9a9a"/><rect x="55" y="20.3" width="1" height="9.4" fill="#8a8a8a"/><rect x="55" y="0" width="1" height="5.9" fill="#9a9a9a"/><rect x="55" y="44.1" width="1" height="5.9" fill="#9a9a9a"/><rect x="56" y="20.6" width="1" height="8.9" fill="#8a8a8a"/><rect x="56" y="0" width="1" height="1.9" fill="#9a9a9a"/><rect x="56" y="48.1" width="1" height="1.9" fill="#9a9a9a"/><rect x="57" y="22.1" width="1" height="5.8" fill="#8a8a8a"/><rect x="57" y="0" width="1" height="0.0" fill="#9a9a9a"/><rect x="57" y="50.0" width="1" height="0.0" fill="#9a9a9a"/><rect x="58" y="21.7" width="1" height="6.6" fill="#8a8a8a"/><rect x="58" y="0" width="1" height="0.7" fill="#9a9a9a"/><rect x="58" y="49.3" width="1" height="0.7" fill="#9a9a9a"/><rect x="59" y="21.3" width="1" height="7.3" fill="#8a8a8a"/><rect x="59" y="0" width="1" height="0.1" fill="#9a9a9a"/><rect x="59" y="49.9" width="1" height="0.1" fill="#9a9a9a"/><rect x="60" y="21.5" width="1" height="7.1" fill="#8a8a8a"/><rect x="60" y="0" width="1" height="1.7" fill="#9a9a9a"/><rect x="60" y="48.3" width="1" height="1.7" fill="#9a9a9a"/><rect x="61" y="21.7" width="1" height="6.6" fill="#8a8a8a"/><rect x="61" y="0" width="1" height="2.4" fill="#9a9a9a"/><rect x="61" y="47.6" width="1" height="2.4" fill="#9a9a9a"/><rect x="62" y="22.7" width="1" height="4.6" fill="#8a8a8a"/><rect x="62" y="0" width="1" height="0.4" fill="#9a9a9a"/><rect x="62" y="49.6" width="1" height="0.4" fill="#9a9a9a"/><rect x="63" y="20.9" width="1" height="8.2" fill="#8a8a8a"/><rect x="63" y="0" width="1" height="2.6" fill="#9a9a9a"/><rect x="63" y="47.4" width="1" height="2.6" fill="#9a9a9a"/><rect x="64" y="20.6" width="1" height="8.7" fill="#8a8a8a"/><rect x="64" y="0" width="1" height="2.4" fill="#9a9a9a"/><rect x="64" y="47.6" width="1" height="2.4" fill="#9a9a9a"/><rect x="65" y="21.8" width="1" height="6.4" fill="#8a8a8a"/><rect x="65" y="0" width="1" height="1.2" fill="#9a9a9a"/><rect x="65" y="48.8" width="1" height="1.2" fill="#9a9a9a"/><rect x="66" y="23.4" width="1" height="3.1" fill="#8a8a8a"/><rect x="66" y="0" width="1" height="2.5" fill="#9a9a9a"/><rect x="66" y="47.5" width="1" height="2.5" fill="#9a9a9a"/><rect x="67" y="23.2" width="1" height="3.5" fill="#8a8a8a"/><rect x="67" y="0" width="1" height="0.9" fill="#9a9a9a"/><rect x="67" y="49.1" width="1" height="0.9" fill="#9a9a9a"/><rect x="68" y="22.4" width="1" height="5.3" fill="#8a8a8a"/><rect x="68" y="0" width="1" height="0.0" fill="#9a9a9a"/><rect x="68" y="50.0" width="1" height="0.0" fill="#9a9a9a"/><rect x="69" y="21.1" width="1" height="7.8" fill="#8a8a8a"/><rect x="69" y="0" width="1" height="3.9" fill="#9a9a9a"/><rect x="69" y="46.1" width="1" height="3.9" fill="#9a9a9a"/><rect x="70" y="23.5" width="1" height="3.0" fill="#8a8a8a"/><rect x="70" y="0" width="1" height="2.3" fill="#9a9a9a"/><rect x="70" y="47.7" width="1" height="2.3" fill="#9a9a9a"/><rect x="71" y="20.1" width="1" height="9.8" fill="#8a8a8a"/><rect x="71" y="0" width="1" height="4.3" fill="#9a9a9a"/><rect x="71" y="45.7" width="1" height="4.3" fill="#9a9a9a"/><rect x="72" y="23.4" width="1" height="3.2" fill="#8a8a8a"/><rect x="72" y="0" width="1" height="0.4" fill="#9a9a9a"/><rect x="72" y="49.6" width="1" height="0.4" fill="#9a9a9a"/><rect x="73" y="21.1" width="1" height="7.8" fill="#8a8a8a"/><rect x="73" y="0" width="1" height="0.4" fill="#9a9a9a"/><rect x="73" y="49.6" width="1" height="0.4" fill="#9a9a9a"/><rect x="74" y="23.4" width="1" height="3.3" fill="#8a8a8a"/><rect x="74" y="0" width="1" height="5.3" fill="#9a9a9a"/><rect x="74" y="44.7" width="1" height="5.3" fill="#9a9a9a"/><rect x="75" y="20.1" width="1" height="9.8" fill="#8a8a8a"/><rect x="75" y="0" width="1" height="3.5" fill="#9a9a9a"/><rect x="75" y="46.5" width="1" height="3.5" fill="#9a9a9a"/><rect x="76" y="22.4" width="1" height="5.2" fill="#8a8a8a"/><rect x="76" y="0" width="1" height="1.0" fill="#9a9a9a"/><rect x="76" y="49.0" width="1" height="1.0" fill="#9a9a9a"/><rect x="77" y="21.7" width="1" height="6.5" fill="#8a8a8a"/><rect x="77" y="0" width="1" height="0.5" fill="#9a9a9a"/><rect x="77" y="49.5" width="1" height="0.5" fill="#9a9a9a"/><rect x="78" y="22.2" width="1" height="5.6" fill="#8a8a8a"/><rect x="78" y="0" width="1" height="1.4" fill="#9a9a9a"/><rect x="78" y="48.6" width="1" height="1.4" fill="#9a9a9a"/><rect x="79" y="20.3" width="1" height="9.4" fill="#8a8a8a"/><rect x="79" y="0" width="1" height="0.1" fill="#9a9a9a"/><rect x="79" y="49.9" width="1" height="0.1" fill="#9a9a9a"/><rect x="80" y="21.0" width="1" height="8.0" fill="#8a8a8a"/><rect x="80" y="0" width="1" height="0.5" fill="#9a9a9a"/><rect x="80" y="49.5" width="1" height="0.5" fill="#9a9a9a"/><rect x="81" y="20.7" width="1" height="8.5" fill="#8a8a8a"/><rect x="81" y="0" width="1" height="0.4" fill="#9a9a9a"/><rect x="81" y="49.6" width="1" height="0.4" fill="#9a9a9a"/><rect x="82" y="23.5" width="1" height="3.1" fill="#8a8a8a"/><rect x="82" y="0" width="1" height="0.7" fill="#9a9a9a"/><rect x="82" y="49.3" width="1" height="0.7" fill="#9a9a9a"/><rect x="83" y="21.0" width="1" height="8.0" fill="#8a8a8a"/><rect x="83" y="0" width="1" height="3.9" fill="#9a9a9a"/><rect x="83" y="46.1" width="1" height="3.9" fill="#9a9a9a"/><rect x="84" y="20.5" width="1" height="9.0" fill="#8a8a8a"/><rect x="84" y="0" width="1" height="4.7" fill="#9a9a9a"/><rect x="84" y="45.3" width="1" height="4.7" fill="#9a9a9a"/><rect x="85" y="20.4" width="1" height="9.2" fill="#8a8a8a"/><rect x="85" y="0" width="1" height="0.1" fill="#9a9a9a"/><rect x="85" y="49.9" width="1" height="0.1" fill="#9a9a9a"/><rect x="86" y="22.9" width="1" height="4.3" fill="#8a8a8a"/><rect x="86" y="0" width="1" height="2.4" fill="#9a9a9a"/><rect x="86" y="47.6" width="1" height="2.4" fill="#9a9a9a"/><rect x="87" y="22.3" width="1" height="5.4" fill="#8a8a8a"/><rect x="87" y="0" width="1" height="4.4" fill="#9a9a9a"/><rect x="87" y="45.6" width="1" height="4.4" fill="#9a9a9a"/><rect x="88" y="22.6" width="1" height="4.8" fill="#8a8a8a"/><rect x="88" y="0" width="1" height="0.6" fill="#9a9a9a"/><rect x="88" y="49.4" width="1" height="0.6" fill="#9a9a9a"/><rect x="89" y="22.4" width="1" height="5.2" fill="#8a8a8a"/><rect x="89" y="0" width="1" height="2.2" fill="#9a9a9a"/><rect x="89" y="47.8" width="1" height="2.2" fill="#9a9a9a"/></svg>
<div class="t" style="left:847px;top:429px;font-weight:bold">out.wav</div>
<div class="t" style="left:847px;top:447px">00:41:43:04</div>
<!-- bin tabs -->
<div class="abs" style="left:1012px;top:610px;width:63px;height:23px;background:#25292c"></div><div class="abs" style="left:984px;top:610px;width:24px;height:23px;background:#2e3236"></div>
<div class="abs" style="left:738px;top:610px;width:78px;height:23px;background:#2a2e32;border:1px solid #3b3f43;border-bottom:3px solid #1e4d6a;border-radius:0 0 4px 4px"></div>
<div class="t" style="left:744px;top:615px">Project Bin</div>
<div class="t" style="left:828px;top:615px">Effects</div>
<div class="t" style="left:887px;top:615px">Compositions</div>

<!-- clip monitor -->
<div class="abs" style="left:1012px;top:340px;width:373px;height:1px;background:#3c4044"></div>
<svg class="abs" style="left:1012px;top:341px" width="373" height="40" viewBox="0 0 373 40"><rect width="373" height="40" fill="#5a5d60"/><defs><clipPath id="oc"><polygon points="0.0,3.6 1.0,4.5 2.0,4.2 3.0,2.0 4.0,5.6 5.0,5.2 6.0,2.9 7.0,3.2 8.0,2.0 9.0,2.3 10.0,4.3 11.0,4.5 12.0,3.5 13.0,2.0 14.0,2.2 15.0,5.9 16.0,2.3 17.0,3.2 18.0,2.2 19.0,3.9 20.0,5.2 21.0,2.5 22.0,2.1 23.0,2.4 24.0,2.0 25.0,2.5 26.0,4.7 27.0,2.4 28.0,4.0 29.0,5.8 30.0,4.2 31.0,2.0 32.0,2.5 33.0,2.0 34.0,2.1 35.0,2.2 36.0,5.5 37.0,2.5 38.0,3.1 39.0,2.0 40.0,4.5 41.0,2.0 42.0,2.0 43.0,3.5 44.0,2.5 45.0,3.2 46.0,2.4 47.0,2.0 48.0,3.9 49.0,2.1 50.0,5.9 51.0,2.7 52.0,3.4 53.0,2.8 54.0,2.0 55.0,2.0 56.0,4.8 57.0,4.1 58.0,3.6 59.0,2.0 60.0,2.1 61.0,2.3 62.0,6.0 63.0,5.8 64.0,3.0 65.0,2.9 66.0,2.7 67.0,2.6 68.0,5.7 69.0,3.0 70.0,2.0 71.0,4.4 72.0,2.5 73.0,4.4 74.0,3.8 75.0,2.5 76.0,2.3 77.0,4.4 78.0,2.3 79.0,3.7 80.0,2.0 81.0,2.3 82.0,2.9 83.0,3.7 84.0,2.5 85.0,4.2 86.0,2.5 87.0,5.0 88.0,5.8 89.0,3.1 90.0,2.1 91.0,5.5 92.0,3.9 93.0,4.1 94.0,4.4 95.0,3.8 96.0,3.6 97.0,3.6 98.0,2.0 99.0,2.8 100.0,2.2 101.0,3.6 102.0,2.9 103.0,2.0 104.0,2.4 105.0,2.1 106.0,2.9 107.0,3.5 108.0,2.2 109.0,2.0 110.0,2.3 111.0,2.1 112.0,2.6 113.0,3.5 114.0,3.2 115.0,3.3 116.0,4.7 117.0,4.6 118.0,2.5 119.0,3.4 120.0,5.7 121.0,3.5 122.0,5.2 123.0,2.0 124.0,3.5 125.0,3.6 126.0,2.6 127.0,2.2 128.0,5.8 129.0,5.7 130.0,3.4 131.0,5.8 132.0,2.7 133.0,5.9 134.0,2.3 135.0,2.1 136.0,2.8 137.0,4.4 138.0,2.0 139.0,2.3 140.0,4.4 141.0,2.3 142.0,5.9 143.0,3.5 144.0,3.7 145.0,4.2 146.0,4.3 147.0,3.1 148.0,2.4 149.0,2.9 150.0,4.2 151.0,2.0 152.0,2.8 153.0,5.2 154.0,2.0 155.0,2.7 156.0,4.0 157.0,2.9 158.0,2.6 159.0,4.9 160.0,2.4 161.0,2.0 162.0,3.9 163.0,2.3 164.0,5.3 165.0,2.9 166.0,3.0 167.0,2.1 168.0,4.6 169.0,2.2 170.0,4.5 171.0,2.0 172.0,5.8 173.0,4.0 174.0,4.8 175.0,3.7 176.0,4.0 177.0,2.3 178.0,2.1 179.0,2.7 180.0,3.5 181.0,2.0 182.0,2.0 183.0,3.3 184.0,5.1 185.0,2.7 186.0,3.4 187.0,5.5 188.0,2.0 189.0,2.1 190.0,3.0 191.0,3.2 192.0,2.3 193.0,2.3 194.0,3.1 195.0,2.2 196.0,4.2 197.0,4.0 198.0,2.0 199.0,2.0 200.0,3.4 201.0,5.1 202.0,2.4 203.0,2.0 204.0,2.0 205.0,5.6 206.0,2.2 207.0,5.8 208.0,4.7 209.0,3.6 210.0,2.2 211.0,3.5 212.0,2.6 213.0,4.8 214.0,4.6 215.0,4.9 216.0,3.4 217.0,4.2 218.0,2.0 219.0,2.2 220.0,5.2 221.0,4.3 222.0,2.9 223.0,3.5 224.0,2.9 225.0,2.1 226.0,2.6 227.0,5.1 228.0,2.3 229.0,2.1 230.0,2.2 231.0,2.0 232.0,2.5 233.0,3.9 234.0,2.9 235.0,2.1 236.0,2.3 237.0,4.1 238.0,2.2 239.0,2.2 240.0,2.6 241.0,2.5 242.0,2.9 243.0,4.1 244.0,2.1 245.0,3.8 246.0,3.7 247.0,5.8 248.0,2.0 249.0,2.7 250.0,3.2 251.0,3.1 252.0,2.0 253.0,5.2 254.0,5.5 255.0,2.2 256.0,2.6 257.0,2.3 258.0,2.4 259.0,2.0 260.0,2.1 261.0,2.6 262.0,2.0 263.0,2.0 264.0,5.4 265.0,4.9 266.0,2.0 267.0,2.9 268.0,2.6 269.0,4.1 270.0,2.4 271.0,4.7 272.0,2.1 273.0,2.0 274.0,4.7 275.0,2.1 276.0,2.2 277.0,2.7 278.0,2.2 279.0,4.0 280.0,2.2 281.0,2.6 282.0,2.7 283.0,4.3 284.0,5.2 285.0,4.3 286.0,2.8 287.0,3.7 288.0,4.1 289.0,2.3 290.0,2.6 291.0,2.0 292.0,2.3 293.0,2.3 294.0,4.3 295.0,2.0 296.0,2.1 297.0,5.0 298.0,3.5 299.0,2.7 300.0,2.4 301.0,3.4 302.0,4.1 303.0,3.1 304.0,4.0 305.0,5.5 306.0,2.1 307.0,5.3 308.0,2.8 309.0,4.4 310.0,3.1 311.0,3.4 312.0,4.7 313.0,2.0 314.0,2.0 315.0,2.9 316.0,2.6 317.0,2.3 318.0,3.3 319.0,4.3 320.0,2.5 321.0,5.9 322.0,4.9 323.0,2.6 324.0,4.8 325.0,2.0 326.0,2.0 327.0,5.2 328.0,4.5 329.0,3.9 330.0,3.6 331.0,2.6 332.0,3.0 333.0,2.1 334.0,2.4 335.0,2.4 336.0,2.9 337.0,2.6 338.0,4.7 339.0,3.9 340.0,3.2 341.0,2.5 342.0,3.8 343.0,2.3 344.0,2.0 345.0,3.3 346.0,4.0 347.0,5.5 348.0,4.1 349.0,4.3 350.0,5.7 351.0,3.9 352.0,4.2 353.0,2.2 354.0,5.2 355.0,5.8 356.0,2.6 357.0,2.6 358.0,3.7 359.0,5.3 360.0,2.6 361.0,3.9 362.0,4.0 363.0,5.1 364.0,2.4 365.0,3.5 366.0,2.1 367.0,4.4 368.0,2.0 369.0,4.8 370.0,4.1 371.0,2.7 372.0,5.3 373.0,2.3 373.0,36.5 372.0,37.6 371.0,36.9 370.0,37.3 369.0,34.9 368.0,36.7 367.0,37.8 366.0,36.4 365.0,34.8 364.0,37.7 363.0,37.8 362.0,37.4 361.0,36.8 360.0,38.0 359.0,36.5 358.0,34.8 357.0,37.9 356.0,38.0 355.0,36.8 354.0,37.8 353.0,36.9 352.0,36.5 351.0,35.2 350.0,34.8 349.0,36.2 348.0,38.0 347.0,37.7 346.0,37.6 345.0,35.7 344.0,37.5 343.0,38.0 342.0,36.9 341.0,36.6 340.0,35.4 339.0,36.2 338.0,34.6 337.0,34.1 336.0,36.0 335.0,37.4 334.0,38.0 333.0,37.4 332.0,36.6 331.0,38.0 330.0,35.4 329.0,35.0 328.0,37.6 327.0,37.8 326.0,35.9 325.0,37.9 324.0,37.0 323.0,37.9 322.0,36.5 321.0,35.2 320.0,37.8 319.0,37.8 318.0,37.5 317.0,37.8 316.0,37.8 315.0,34.9 314.0,36.7 313.0,34.2 312.0,37.3 311.0,38.0 310.0,34.2 309.0,34.5 308.0,37.2 307.0,37.1 306.0,37.6 305.0,35.5 304.0,37.2 303.0,37.9 302.0,38.0 301.0,35.3 300.0,38.0 299.0,37.5 298.0,37.8 297.0,34.4 296.0,37.5 295.0,38.0 294.0,36.8 293.0,38.0 292.0,36.2 291.0,37.9 290.0,37.9 289.0,35.4 288.0,36.0 287.0,34.4 286.0,35.3 285.0,36.7 284.0,36.3 283.0,36.8 282.0,37.6 281.0,38.0 280.0,37.7 279.0,38.0 278.0,38.0 277.0,36.7 276.0,38.0 275.0,38.0 274.0,37.6 273.0,35.6 272.0,37.6 271.0,37.8 270.0,37.2 269.0,34.7 268.0,36.4 267.0,36.7 266.0,36.8 265.0,37.8 264.0,36.6 263.0,36.8 262.0,37.6 261.0,36.9 260.0,37.0 259.0,34.2 258.0,38.0 257.0,37.3 256.0,38.0 255.0,38.0 254.0,38.0 253.0,37.0 252.0,38.0 251.0,37.5 250.0,34.1 249.0,38.0 248.0,35.6 247.0,38.0 246.0,37.3 245.0,34.5 244.0,37.8 243.0,35.9 242.0,37.7 241.0,37.6 240.0,34.2 239.0,38.0 238.0,38.0 237.0,37.9 236.0,36.2 235.0,36.2 234.0,34.4 233.0,36.2 232.0,34.5 231.0,34.6 230.0,37.1 229.0,37.7 228.0,37.7 227.0,37.9 226.0,37.4 225.0,37.9 224.0,38.0 223.0,37.3 222.0,34.8 221.0,38.0 220.0,37.1 219.0,38.0 218.0,38.0 217.0,37.4 216.0,36.7 215.0,36.9 214.0,37.2 213.0,36.3 212.0,37.9 211.0,37.5 210.0,37.6 209.0,37.5 208.0,37.9 207.0,36.2 206.0,37.9 205.0,36.1 204.0,37.9 203.0,35.9 202.0,35.5 201.0,37.1 200.0,37.8 199.0,37.9 198.0,36.2 197.0,36.3 196.0,37.9 195.0,37.4 194.0,37.9 193.0,35.7 192.0,36.8 191.0,36.5 190.0,34.7 189.0,36.4 188.0,36.1 187.0,37.4 186.0,37.0 185.0,37.6 184.0,37.9 183.0,35.8 182.0,38.0 181.0,37.4 180.0,38.0 179.0,37.9 178.0,36.5 177.0,34.6 176.0,37.9 175.0,34.4 174.0,37.8 173.0,38.0 172.0,34.0 171.0,35.9 170.0,36.2 169.0,35.3 168.0,38.0 167.0,36.6 166.0,37.6 165.0,36.8 164.0,37.9 163.0,35.6 162.0,37.3 161.0,35.2 160.0,35.2 159.0,37.8 158.0,37.4 157.0,34.7 156.0,36.4 155.0,36.7 154.0,35.6 153.0,36.8 152.0,34.6 151.0,37.7 150.0,36.6 149.0,37.5 148.0,36.9 147.0,37.5 146.0,37.6 145.0,37.9 144.0,36.5 143.0,37.1 142.0,37.7 141.0,37.9 140.0,37.8 139.0,34.5 138.0,36.9 137.0,35.3 136.0,37.7 135.0,36.5 134.0,37.1 133.0,37.0 132.0,37.6 131.0,37.0 130.0,37.7 129.0,34.7 128.0,37.4 127.0,37.7 126.0,37.3 125.0,34.8 124.0,37.9 123.0,36.7 122.0,38.0 121.0,37.5 120.0,34.3 119.0,36.7 118.0,37.9 117.0,36.3 116.0,37.3 115.0,34.3 114.0,37.5 113.0,38.0 112.0,38.0 111.0,35.2 110.0,37.3 109.0,37.3 108.0,34.7 107.0,36.6 106.0,37.4 105.0,38.0 104.0,37.9 103.0,37.9 102.0,37.8 101.0,38.0 100.0,36.1 99.0,36.3 98.0,37.9 97.0,35.9 96.0,35.6 95.0,37.3 94.0,36.7 93.0,37.9 92.0,35.9 91.0,37.1 90.0,35.2 89.0,36.9 88.0,34.3 87.0,36.1 86.0,35.2 85.0,35.3 84.0,36.3 83.0,35.5 82.0,35.3 81.0,36.2 80.0,36.8 79.0,36.7 78.0,34.4 77.0,36.1 76.0,37.1 75.0,36.0 74.0,35.7 73.0,36.1 72.0,35.5 71.0,35.0 70.0,37.7 69.0,37.5 68.0,36.4 67.0,34.1 66.0,37.9 65.0,37.7 64.0,35.9 63.0,37.2 62.0,35.1 61.0,37.2 60.0,35.1 59.0,37.2 58.0,35.5 57.0,34.4 56.0,37.9 55.0,37.0 54.0,34.6 53.0,37.3 52.0,35.3 51.0,37.8 50.0,36.9 49.0,38.0 48.0,34.0 47.0,37.9 46.0,37.9 45.0,37.6 44.0,34.6 43.0,34.6 42.0,37.5 41.0,34.4 40.0,35.0 39.0,35.8 38.0,35.6 37.0,37.5 36.0,34.5 35.0,35.7 34.0,34.4 33.0,38.0 32.0,36.7 31.0,35.5 30.0,35.1 29.0,38.0 28.0,38.0 27.0,37.1 26.0,37.1 25.0,37.6 24.0,36.2 23.0,36.5 22.0,38.0 21.0,37.9 20.0,37.6 19.0,34.3 18.0,34.5 17.0,36.2 16.0,34.3 15.0,35.0 14.0,37.8 13.0,35.0 12.0,37.9 11.0,37.9 10.0,37.9 9.0,34.6 8.0,37.8 7.0,36.7 6.0,37.8 5.0,37.9 4.0,36.3 3.0,37.1 2.0,34.6 1.0,34.4 0.0,35.8"/></clipPath></defs><g clip-path="url(#oc)"><rect width="154" height="40" fill="#7a7b7d"/><rect x="154" width="219" height="40" fill="#67696b"/><rect x="27" width="37" height="40" fill="#3d8fc4"/></g><rect x="0" y="14.4" width="1" height="10.2" fill="#3a3c3e"/><rect x="1" y="18.9" width="1" height="1.3" fill="#3a3c3e"/><rect x="2" y="18.9" width="1" height="1.2" fill="#3a3c3e"/><rect x="3" y="18.9" width="1" height="1.2" fill="#3a3c3e"/><rect x="4" y="18.0" width="1" height="3.0" fill="#3a3c3e"/><rect x="5" y="17.8" width="1" height="3.4" fill="#3a3c3e"/><rect x="6" y="18.9" width="1" height="1.3" fill="#3a3c3e"/><rect x="7" y="18.9" width="1" height="1.3" fill="#3a3c3e"/><rect x="8" y="17.8" width="1" height="3.3" fill="#3a3c3e"/><rect x="9" y="17.5" width="1" height="3.9" fill="#3a3c3e"/><rect x="10" y="17.3" width="1" height="4.5" fill="#3a3c3e"/><rect x="11" y="17.0" width="1" height="5.1" fill="#3a3c3e"/><rect x="12" y="18.9" width="1" height="1.2" fill="#3a3c3e"/><rect x="13" y="18.3" width="1" height="2.3" fill="#3a3c3e"/><rect x="14" y="16.0" width="1" height="7.0" fill="#3a3c3e"/><rect x="15" y="14.5" width="1" height="10.0" fill="#3a3c3e"/><rect x="16" y="18.7" width="1" height="1.5" fill="#3a3c3e"/><rect x="17" y="15.8" width="1" height="7.3" fill="#3a3c3e"/><rect x="18" y="17.6" width="1" height="3.9" fill="#3a3c3e"/><rect x="19" y="14.9" width="1" height="9.2" fill="#3a3c3e"/><rect x="20" y="18.8" width="1" height="1.3" fill="#3a3c3e"/><rect x="21" y="17.2" width="1" height="4.6" fill="#3a3c3e"/><rect x="22" y="15.9" width="1" height="7.1" fill="#3a3c3e"/><rect x="23" y="18.4" width="1" height="2.3" fill="#3a3c3e"/><rect x="24" y="18.9" width="1" height="1.2" fill="#3a3c3e"/><rect x="25" y="18.9" width="1" height="1.3" fill="#3a3c3e"/><rect x="26" y="18.9" width="1" height="1.2" fill="#3a3c3e"/><rect x="27" y="18.9" width="1" height="1.2" fill="#3a3c3e"/><rect x="28" y="18.9" width="1" height="1.2" fill="#3a3c3e"/><rect x="29" y="17.7" width="1" height="3.5" fill="#3a3c3e"/><rect x="30" y="18.9" width="1" height="1.2" fill="#3a3c3e"/><rect x="31" y="16.7" width="1" height="5.6" fill="#3a3c3e"/><rect x="32" y="16.9" width="1" height="5.2" fill="#3a3c3e"/><rect x="33" y="16.2" width="1" height="6.6" fill="#3a3c3e"/><rect x="34" y="16.3" width="1" height="6.4" fill="#3a3c3e"/><rect x="35" y="17.1" width="1" height="4.8" fill="#3a3c3e"/><rect x="36" y="15.0" width="1" height="9.1" fill="#3a3c3e"/><rect x="37" y="14.5" width="1" height="10.0" fill="#3a3c3e"/><rect x="38" y="17.7" width="1" height="3.6" fill="#3a3c3e"/><rect x="39" y="14.4" width="1" height="10.2" fill="#3a3c3e"/><rect x="40" y="18.9" width="1" height="1.2" fill="#3a3c3e"/><rect x="41" y="18.9" width="1" height="1.2" fill="#3a3c3e"/><rect x="42" y="18.9" width="1" height="1.2" fill="#3a3c3e"/><rect x="43" y="18.9" width="1" height="1.3" fill="#3a3c3e"/><rect x="44" y="18.6" width="1" height="1.7" fill="#3a3c3e"/><rect x="45" y="18.4" width="1" height="2.2" fill="#3a3c3e"/><rect x="46" y="17.3" width="1" height="4.4" fill="#3a3c3e"/><rect x="47" y="16.8" width="1" height="5.3" fill="#3a3c3e"/><rect x="48" y="18.9" width="1" height="1.2" fill="#3a3c3e"/><rect x="49" y="18.6" width="1" height="1.9" fill="#3a3c3e"/><rect x="50" y="18.1" width="1" height="2.8" fill="#3a3c3e"/><rect x="51" y="18.6" width="1" height="1.7" fill="#3a3c3e"/><rect x="52" y="18.9" width="1" height="1.2" fill="#3a3c3e"/><rect x="53" y="17.8" width="1" height="3.3" fill="#3a3c3e"/><rect x="54" y="18.6" width="1" height="1.7" fill="#3a3c3e"/><rect x="55" y="17.3" width="1" height="4.4" fill="#3a3c3e"/><rect x="56" y="18.3" width="1" height="2.4" fill="#3a3c3e"/><rect x="57" y="14.4" width="1" height="10.1" fill="#3a3c3e"/><rect x="58" y="14.7" width="1" height="9.6" fill="#3a3c3e"/><rect x="59" y="18.9" width="1" height="1.2" fill="#3a3c3e"/><rect x="60" y="16.7" width="1" height="5.6" fill="#3a3c3e"/><rect x="61" y="17.0" width="1" height="5.0" fill="#3a3c3e"/><rect x="62" y="18.8" width="1" height="1.5" fill="#3a3c3e"/><rect x="63" y="18.9" width="1" height="1.2" fill="#3a3c3e"/><rect x="64" y="18.4" width="1" height="2.3" fill="#3a3c3e"/><rect x="65" y="18.7" width="1" height="1.6" fill="#3a3c3e"/><rect x="66" y="16.9" width="1" height="5.2" fill="#3a3c3e"/><rect x="67" y="15.0" width="1" height="8.9" fill="#3a3c3e"/><rect x="68" y="18.6" width="1" height="1.8" fill="#3a3c3e"/><rect x="69" y="18.8" width="1" height="1.4" fill="#3a3c3e"/><rect x="70" y="18.3" width="1" height="2.4" fill="#3a3c3e"/><rect x="71" y="17.2" width="1" height="4.6" fill="#3a3c3e"/><rect x="72" y="16.4" width="1" height="6.1" fill="#3a3c3e"/><rect x="73" y="17.9" width="1" height="3.1" fill="#3a3c3e"/><rect x="74" y="18.8" width="1" height="1.5" fill="#3a3c3e"/><rect x="75" y="18.7" width="1" height="1.6" fill="#3a3c3e"/><rect x="76" y="15.9" width="1" height="7.3" fill="#3a3c3e"/><rect x="77" y="18.2" width="1" height="2.6" fill="#3a3c3e"/><rect x="78" y="18.9" width="1" height="1.2" fill="#3a3c3e"/><rect x="79" y="18.5" width="1" height="1.9" fill="#3a3c3e"/><rect x="80" y="18.8" width="1" height="1.3" fill="#3a3c3e"/><rect x="81" y="17.4" width="1" height="4.2" fill="#3a3c3e"/><rect x="82" y="18.9" width="1" height="1.2" fill="#3a3c3e"/><rect x="83" y="18.8" width="1" height="1.4" fill="#3a3c3e"/><rect x="84" y="18.9" width="1" height="1.2" fill="#3a3c3e"/><rect x="85" y="18.4" width="1" height="2.3" fill="#3a3c3e"/><rect x="86" y="14.1" width="1" height="10.7" fill="#3a3c3e"/><rect x="87" y="18.1" width="1" height="2.8" fill="#3a3c3e"/><rect x="88" y="18.6" width="1" height="1.8" fill="#3a3c3e"/><rect x="89" y="14.8" width="1" height="9.3" fill="#3a3c3e"/><rect x="90" y="18.9" width="1" height="1.2" fill="#3a3c3e"/><rect x="91" y="18.7" width="1" height="1.7" fill="#3a3c3e"/><rect x="92" y="16.2" width="1" height="6.5" fill="#3a3c3e"/><rect x="93" y="18.9" width="1" height="1.2" fill="#3a3c3e"/><rect x="94" y="16.7" width="1" height="5.7" fill="#3a3c3e"/><rect x="95" y="18.7" width="1" height="1.7" fill="#3a3c3e"/><rect x="96" y="18.9" width="1" height="1.2" fill="#3a3c3e"/><rect x="97" y="18.8" width="1" height="1.4" fill="#3a3c3e"/><rect x="98" y="18.4" width="1" height="2.2" fill="#3a3c3e"/><rect x="99" y="18.6" width="1" height="1.8" fill="#3a3c3e"/><rect x="100" y="18.2" width="1" height="2.6" fill="#3a3c3e"/><rect x="101" y="18.9" width="1" height="1.2" fill="#3a3c3e"/><rect x="102" y="18.8" width="1" height="1.3" fill="#3a3c3e"/><rect x="103" y="14.3" width="1" height="10.4" fill="#3a3c3e"/><rect x="104" y="18.5" width="1" height="2.1" fill="#3a3c3e"/><rect x="105" y="18.4" width="1" height="2.3" fill="#3a3c3e"/><rect x="106" y="18.9" width="1" height="1.2" fill="#3a3c3e"/><rect x="107" y="18.8" width="1" height="1.4" fill="#3a3c3e"/><rect x="108" y="14.5" width="1" height="9.9" fill="#3a3c3e"/><rect x="109" y="17.3" width="1" height="4.4" fill="#3a3c3e"/><rect x="110" y="18.2" width="1" height="2.5" fill="#3a3c3e"/><rect x="111" y="18.9" width="1" height="1.2" fill="#3a3c3e"/><rect x="112" y="18.6" width="1" height="1.8" fill="#3a3c3e"/><rect x="113" y="16.5" width="1" height="5.9" fill="#3a3c3e"/><rect x="114" y="18.5" width="1" height="2.0" fill="#3a3c3e"/><rect x="115" y="17.9" width="1" height="3.3" fill="#3a3c3e"/><rect x="116" y="15.2" width="1" height="8.5" fill="#3a3c3e"/><rect x="117" y="17.6" width="1" height="3.9" fill="#3a3c3e"/><rect x="118" y="17.6" width="1" height="3.8" fill="#3a3c3e"/><rect x="119" y="18.9" width="1" height="1.2" fill="#3a3c3e"/><rect x="120" y="18.9" width="1" height="1.2" fill="#3a3c3e"/><rect x="121" y="16.6" width="1" height="5.8" fill="#3a3c3e"/><rect x="122" y="18.5" width="1" height="1.9" fill="#3a3c3e"/><rect x="123" y="15.6" width="1" height="7.9" fill="#3a3c3e"/><rect x="124" y="16.1" width="1" height="6.8" fill="#3a3c3e"/><rect x="125" y="15.1" width="1" height="8.9" fill="#3a3c3e"/><rect x="126" y="18.6" width="1" height="1.7" fill="#3a3c3e"/><rect x="127" y="13.9" width="1" height="11.2" fill="#3a3c3e"/><rect x="128" y="16.7" width="1" height="5.5" fill="#3a3c3e"/><rect x="129" y="15.4" width="1" height="8.3" fill="#3a3c3e"/><rect x="130" y="18.9" width="1" height="1.2" fill="#3a3c3e"/><rect x="131" y="16.5" width="1" height="6.0" fill="#3a3c3e"/><rect x="132" y="18.5" width="1" height="2.0" fill="#3a3c3e"/><rect x="133" y="14.3" width="1" height="10.4" fill="#3a3c3e"/><rect x="134" y="14.0" width="1" height="11.0" fill="#3a3c3e"/><rect x="135" y="18.8" width="1" height="1.3" fill="#3a3c3e"/><rect x="136" y="18.5" width="1" height="1.9" fill="#3a3c3e"/><rect x="137" y="18.8" width="1" height="1.4" fill="#3a3c3e"/><rect x="138" y="18.4" width="1" height="2.2" fill="#3a3c3e"/><rect x="139" y="18.8" width="1" height="1.4" fill="#3a3c3e"/><rect x="140" y="17.4" width="1" height="4.2" fill="#3a3c3e"/><rect x="141" y="18.9" width="1" height="1.2" fill="#3a3c3e"/><rect x="142" y="18.9" width="1" height="1.2" fill="#3a3c3e"/><rect x="143" y="18.4" width="1" height="2.2" fill="#3a3c3e"/><rect x="144" y="18.9" width="1" height="1.2" fill="#3a3c3e"/><rect x="145" y="18.6" width="1" height="1.8" fill="#3a3c3e"/><rect x="146" y="15.3" width="1" height="8.4" fill="#3a3c3e"/><rect x="147" y="15.4" width="1" height="8.1" fill="#3a3c3e"/><rect x="148" y="18.9" width="1" height="1.3" fill="#3a3c3e"/><rect x="149" y="18.9" width="1" height="1.2" fill="#3a3c3e"/><rect x="150" y="16.1" width="1" height="6.9" fill="#3a3c3e"/><rect x="151" y="14.5" width="1" height="10.1" fill="#3a3c3e"/><rect x="152" y="17.8" width="1" height="3.3" fill="#3a3c3e"/><rect x="153" y="18.9" width="1" height="1.2" fill="#3a3c3e"/><rect x="154" y="18.8" width="1" height="1.3" fill="#3a3c3e"/><rect x="155" y="15.0" width="1" height="9.0" fill="#3a3c3e"/><rect x="156" y="14.8" width="1" height="9.4" fill="#3a3c3e"/><rect x="157" y="18.9" width="1" height="1.2" fill="#3a3c3e"/><rect x="158" y="18.9" width="1" height="1.3" fill="#3a3c3e"/><rect x="159" y="18.5" width="1" height="2.0" fill="#3a3c3e"/><rect x="160" y="18.8" width="1" height="1.4" fill="#3a3c3e"/><rect x="161" y="16.8" width="1" height="5.5" fill="#3a3c3e"/><rect x="162" y="18.6" width="1" height="1.7" fill="#3a3c3e"/><rect x="163" y="16.6" width="1" height="5.9" fill="#3a3c3e"/><rect x="164" y="18.9" width="1" height="1.2" fill="#3a3c3e"/><rect x="165" y="18.2" width="1" height="2.6" fill="#3a3c3e"/><rect x="166" y="14.3" width="1" height="10.5" fill="#3a3c3e"/><rect x="167" y="17.2" width="1" height="4.7" fill="#3a3c3e"/><rect x="168" y="18.9" width="1" height="1.2" fill="#3a3c3e"/><rect x="169" y="18.9" width="1" height="1.2" fill="#3a3c3e"/><rect x="170" y="17.6" width="1" height="3.9" fill="#3a3c3e"/><rect x="171" y="18.6" width="1" height="1.7" fill="#3a3c3e"/><rect x="172" y="18.6" width="1" height="1.7" fill="#3a3c3e"/><rect x="173" y="18.4" width="1" height="2.3" fill="#3a3c3e"/><rect x="174" y="17.9" width="1" height="3.2" fill="#3a3c3e"/><rect x="175" y="14.4" width="1" height="10.2" fill="#3a3c3e"/><rect x="176" y="18.8" width="1" height="1.3" fill="#3a3c3e"/><rect x="177" y="18.0" width="1" height="3.0" fill="#3a3c3e"/><rect x="178" y="18.8" width="1" height="1.4" fill="#3a3c3e"/><rect x="179" y="18.1" width="1" height="2.8" fill="#3a3c3e"/><rect x="180" y="16.9" width="1" height="5.1" fill="#3a3c3e"/><rect x="181" y="18.9" width="1" height="1.2" fill="#3a3c3e"/><rect x="182" y="18.3" width="1" height="2.3" fill="#3a3c3e"/><rect x="183" y="17.1" width="1" height="4.7" fill="#3a3c3e"/><rect x="184" y="18.9" width="1" height="1.2" fill="#3a3c3e"/><rect x="185" y="16.6" width="1" height="5.8" fill="#3a3c3e"/><rect x="186" y="18.5" width="1" height="1.9" fill="#3a3c3e"/><rect x="187" y="18.3" width="1" height="2.5" fill="#3a3c3e"/><rect x="188" y="17.8" width="1" height="3.5" fill="#3a3c3e"/><rect x="189" y="16.4" width="1" height="6.2" fill="#3a3c3e"/><rect x="190" y="18.9" width="1" height="1.2" fill="#3a3c3e"/><rect x="191" y="18.3" width="1" height="2.5" fill="#3a3c3e"/><rect x="192" y="18.9" width="1" height="1.2" fill="#3a3c3e"/><rect x="193" y="18.6" width="1" height="1.8" fill="#3a3c3e"/><rect x="194" y="18.7" width="1" height="1.6" fill="#3a3c3e"/><rect x="195" y="18.9" width="1" height="1.2" fill="#3a3c3e"/><rect x="196" y="18.8" width="1" height="1.5" fill="#3a3c3e"/><rect x="197" y="18.4" width="1" height="2.1" fill="#3a3c3e"/><rect x="198" y="17.5" width="1" height="4.0" fill="#3a3c3e"/><rect x="199" y="14.9" width="1" height="9.1" fill="#3a3c3e"/><rect x="200" y="18.6" width="1" height="1.7" fill="#3a3c3e"/><rect x="201" y="18.2" width="1" height="2.7" fill="#3a3c3e"/><rect x="202" y="17.1" width="1" height="4.8" fill="#3a3c3e"/><rect x="203" y="14.8" width="1" height="9.4" fill="#3a3c3e"/><rect x="204" y="14.6" width="1" height="9.8" fill="#3a3c3e"/><rect x="205" y="14.1" width="1" height="10.8" fill="#3a3c3e"/><rect x="206" y="18.8" width="1" height="1.5" fill="#3a3c3e"/><rect x="207" y="18.9" width="1" height="1.2" fill="#3a3c3e"/><rect x="208" y="14.9" width="1" height="9.3" fill="#3a3c3e"/><rect x="209" y="18.9" width="1" height="1.2" fill="#3a3c3e"/><rect x="210" y="18.4" width="1" height="2.1" fill="#3a3c3e"/><rect x="211" y="16.9" width="1" height="5.2" fill="#3a3c3e"/><rect x="212" y="18.2" width="1" height="2.7" fill="#3a3c3e"/><rect x="213" y="18.6" width="1" height="1.8" fill="#3a3c3e"/><rect x="214" y="14.9" width="1" height="9.1" fill="#3a3c3e"/><rect x="215" y="18.8" width="1" height="1.5" fill="#3a3c3e"/><rect x="216" y="18.1" width="1" height="2.9" fill="#3a3c3e"/><rect x="217" y="16.0" width="1" height="6.9" fill="#3a3c3e"/><rect x="218" y="18.9" width="1" height="1.2" fill="#3a3c3e"/><rect x="219" y="18.7" width="1" height="1.6" fill="#3a3c3e"/><rect x="220" y="18.3" width="1" height="2.4" fill="#3a3c3e"/><rect x="221" y="18.0" width="1" height="3.0" fill="#3a3c3e"/><rect x="222" y="18.9" width="1" height="1.3" fill="#3a3c3e"/><rect x="223" y="18.4" width="1" height="2.1" fill="#3a3c3e"/><rect x="224" y="18.9" width="1" height="1.2" fill="#3a3c3e"/><rect x="225" y="18.9" width="1" height="1.2" fill="#3a3c3e"/><rect x="226" y="18.7" width="1" height="1.6" fill="#3a3c3e"/><rect x="227" y="18.9" width="1" height="1.2" fill="#3a3c3e"/><rect x="228" y="14.4" width="1" height="10.3" fill="#3a3c3e"/><rect x="229" y="18.8" width="1" height="1.4" fill="#3a3c3e"/><rect x="230" y="18.8" width="1" height="1.4" fill="#3a3c3e"/><rect x="231" y="16.5" width="1" height="6.0" fill="#3a3c3e"/><rect x="232" y="16.9" width="1" height="5.3" fill="#3a3c3e"/><rect x="233" y="18.8" width="1" height="1.4" fill="#3a3c3e"/><rect x="234" y="16.0" width="1" height="6.9" fill="#3a3c3e"/><rect x="235" y="17.7" width="1" height="3.6" fill="#3a3c3e"/><rect x="236" y="18.6" width="1" height="1.8" fill="#3a3c3e"/><rect x="237" y="17.7" width="1" height="3.7" fill="#3a3c3e"/><rect x="238" y="18.8" width="1" height="1.3" fill="#3a3c3e"/><rect x="239" y="18.8" width="1" height="1.4" fill="#3a3c3e"/><rect x="240" y="15.5" width="1" height="7.9" fill="#3a3c3e"/><rect x="241" y="18.5" width="1" height="2.0" fill="#3a3c3e"/><rect x="242" y="15.3" width="1" height="8.4" fill="#3a3c3e"/><rect x="243" y="18.9" width="1" height="1.3" fill="#3a3c3e"/><rect x="244" y="18.9" width="1" height="1.2" fill="#3a3c3e"/><rect x="245" y="18.9" width="1" height="1.2" fill="#3a3c3e"/><rect x="246" y="16.9" width="1" height="5.2" fill="#3a3c3e"/><rect x="247" y="18.0" width="1" height="3.0" fill="#3a3c3e"/><rect x="248" y="18.9" width="1" height="1.2" fill="#3a3c3e"/><rect x="249" y="18.9" width="1" height="1.2" fill="#3a3c3e"/><rect x="250" y="16.1" width="1" height="6.8" fill="#3a3c3e"/><rect x="251" y="18.3" width="1" height="2.4" fill="#3a3c3e"/><rect x="252" y="15.6" width="1" height="7.8" fill="#3a3c3e"/><rect x="253" y="18.9" width="1" height="1.2" fill="#3a3c3e"/><rect x="254" y="17.9" width="1" height="3.2" fill="#3a3c3e"/><rect x="255" y="18.9" width="1" height="1.2" fill="#3a3c3e"/><rect x="256" y="17.0" width="1" height="4.9" fill="#3a3c3e"/><rect x="257" y="17.8" width="1" height="3.5" fill="#3a3c3e"/><rect x="258" y="17.8" width="1" height="3.5" fill="#3a3c3e"/><rect x="259" y="18.8" width="1" height="1.3" fill="#3a3c3e"/><rect x="260" y="14.6" width="1" height="9.7" fill="#3a3c3e"/><rect x="261" y="18.9" width="1" height="1.2" fill="#3a3c3e"/><rect x="262" y="18.9" width="1" height="1.2" fill="#3a3c3e"/><rect x="263" y="17.3" width="1" height="4.4" fill="#3a3c3e"/><rect x="264" y="18.9" width="1" height="1.2" fill="#3a3c3e"/><rect x="265" y="18.9" width="1" height="1.2" fill="#3a3c3e"/><rect x="266" y="18.4" width="1" height="2.2" fill="#3a3c3e"/><rect x="267" y="17.5" width="1" height="3.9" fill="#3a3c3e"/><rect x="268" y="15.4" width="1" height="8.3" fill="#3a3c3e"/><rect x="269" y="17.0" width="1" height="4.9" fill="#3a3c3e"/><rect x="270" y="18.9" width="1" height="1.2" fill="#3a3c3e"/><rect x="271" y="17.6" width="1" height="3.9" fill="#3a3c3e"/><rect x="272" y="15.9" width="1" height="7.2" fill="#3a3c3e"/><rect x="273" y="18.9" width="1" height="1.2" fill="#3a3c3e"/><rect x="274" y="16.8" width="1" height="5.5" fill="#3a3c3e"/><rect x="275" y="18.8" width="1" height="1.4" fill="#3a3c3e"/><rect x="276" y="18.8" width="1" height="1.5" fill="#3a3c3e"/><rect x="277" y="18.9" width="1" height="1.2" fill="#3a3c3e"/><rect x="278" y="16.7" width="1" height="5.6" fill="#3a3c3e"/><rect x="279" y="18.2" width="1" height="2.6" fill="#3a3c3e"/><rect x="280" y="15.2" width="1" height="8.5" fill="#3a3c3e"/><rect x="281" y="18.4" width="1" height="2.2" fill="#3a3c3e"/><rect x="282" y="18.9" width="1" height="1.2" fill="#3a3c3e"/><rect x="283" y="18.8" width="1" height="1.3" fill="#3a3c3e"/><rect x="284" y="18.8" width="1" height="1.4" fill="#3a3c3e"/><rect x="285" y="14.7" width="1" height="9.7" fill="#3a3c3e"/><rect x="286" y="18.9" width="1" height="1.3" fill="#3a3c3e"/><rect x="287" y="18.9" width="1" height="1.2" fill="#3a3c3e"/><rect x="288" y="18.7" width="1" height="1.6" fill="#3a3c3e"/><rect x="289" y="18.9" width="1" height="1.2" fill="#3a3c3e"/><rect x="290" y="18.5" width="1" height="2.0" fill="#3a3c3e"/><rect x="291" y="17.7" width="1" height="3.6" fill="#3a3c3e"/><rect x="292" y="17.5" width="1" height="4.0" fill="#3a3c3e"/><rect x="293" y="18.9" width="1" height="1.3" fill="#3a3c3e"/><rect x="294" y="18.9" width="1" height="1.2" fill="#3a3c3e"/><rect x="295" y="18.3" width="1" height="2.4" fill="#3a3c3e"/><rect x="296" y="17.3" width="1" height="4.4" fill="#3a3c3e"/><rect x="297" y="18.5" width="1" height="2.1" fill="#3a3c3e"/><rect x="298" y="18.0" width="1" height="3.1" fill="#3a3c3e"/><rect x="299" y="15.1" width="1" height="8.8" fill="#3a3c3e"/><rect x="300" y="18.9" width="1" height="1.2" fill="#3a3c3e"/><rect x="301" y="18.8" width="1" height="1.4" fill="#3a3c3e"/><rect x="302" y="18.3" width="1" height="2.4" fill="#3a3c3e"/><rect x="303" y="18.1" width="1" height="2.7" fill="#3a3c3e"/><rect x="304" y="15.3" width="1" height="8.5" fill="#3a3c3e"/><rect x="305" y="18.0" width="1" height="2.9" fill="#3a3c3e"/><rect x="306" y="17.4" width="1" height="4.1" fill="#3a3c3e"/><rect x="307" y="18.5" width="1" height="1.9" fill="#3a3c3e"/><rect x="308" y="16.5" width="1" height="6.0" fill="#3a3c3e"/><rect x="309" y="16.0" width="1" height="7.0" fill="#3a3c3e"/><rect x="310" y="18.8" width="1" height="1.5" fill="#3a3c3e"/><rect x="311" y="18.9" width="1" height="1.2" fill="#3a3c3e"/><rect x="312" y="18.8" width="1" height="1.4" fill="#3a3c3e"/><rect x="313" y="18.7" width="1" height="1.7" fill="#3a3c3e"/><rect x="314" y="15.4" width="1" height="8.2" fill="#3a3c3e"/><rect x="315" y="18.8" width="1" height="1.4" fill="#3a3c3e"/><rect x="316" y="17.7" width="1" height="3.7" fill="#3a3c3e"/><rect x="317" y="17.6" width="1" height="3.8" fill="#3a3c3e"/><rect x="318" y="14.5" width="1" height="9.9" fill="#3a3c3e"/><rect x="319" y="18.9" width="1" height="1.2" fill="#3a3c3e"/><rect x="320" y="16.6" width="1" height="5.8" fill="#3a3c3e"/><rect x="321" y="18.7" width="1" height="1.6" fill="#3a3c3e"/><rect x="322" y="18.9" width="1" height="1.2" fill="#3a3c3e"/><rect x="323" y="17.6" width="1" height="3.7" fill="#3a3c3e"/><rect x="324" y="15.9" width="1" height="7.2" fill="#3a3c3e"/><rect x="325" y="17.9" width="1" height="3.2" fill="#3a3c3e"/><rect x="326" y="18.9" width="1" height="1.2" fill="#3a3c3e"/><rect x="327" y="14.3" width="1" height="10.4" fill="#3a3c3e"/><rect x="328" y="18.6" width="1" height="1.8" fill="#3a3c3e"/><rect x="329" y="17.6" width="1" height="3.8" fill="#3a3c3e"/><rect x="330" y="17.0" width="1" height="5.0" fill="#3a3c3e"/><rect x="331" y="18.8" width="1" height="1.4" fill="#3a3c3e"/><rect x="332" y="18.6" width="1" height="1.9" fill="#3a3c3e"/><rect x="333" y="18.7" width="1" height="1.6" fill="#3a3c3e"/><rect x="334" y="18.9" width="1" height="1.2" fill="#3a3c3e"/><rect x="335" y="18.9" width="1" height="1.2" fill="#3a3c3e"/><rect x="336" y="17.1" width="1" height="4.9" fill="#3a3c3e"/><rect x="337" y="18.6" width="1" height="1.9" fill="#3a3c3e"/><rect x="338" y="15.6" width="1" height="7.8" fill="#3a3c3e"/><rect x="339" y="18.9" width="1" height="1.2" fill="#3a3c3e"/><rect x="340" y="18.8" width="1" height="1.5" fill="#3a3c3e"/><rect x="341" y="18.9" width="1" height="1.3" fill="#3a3c3e"/><rect x="342" y="14.7" width="1" height="9.6" fill="#3a3c3e"/><rect x="343" y="16.4" width="1" height="6.1" fill="#3a3c3e"/><rect x="344" y="15.3" width="1" height="8.4" fill="#3a3c3e"/><rect x="345" y="18.3" width="1" height="2.5" fill="#3a3c3e"/><rect x="346" y="18.9" width="1" height="1.2" fill="#3a3c3e"/><rect x="347" y="18.5" width="1" height="1.9" fill="#3a3c3e"/><rect x="348" y="18.8" width="1" height="1.3" fill="#3a3c3e"/><rect x="349" y="18.9" width="1" height="1.2" fill="#3a3c3e"/><rect x="350" y="18.0" width="1" height="3.0" fill="#3a3c3e"/><rect x="351" y="18.8" width="1" height="1.4" fill="#3a3c3e"/><rect x="352" y="18.9" width="1" height="1.2" fill="#3a3c3e"/><rect x="353" y="18.2" width="1" height="2.5" fill="#3a3c3e"/><rect x="354" y="14.8" width="1" height="9.3" fill="#3a3c3e"/><rect x="355" y="14.7" width="1" height="9.7" fill="#3a3c3e"/><rect x="356" y="18.4" width="1" height="2.2" fill="#3a3c3e"/><rect x="357" y="18.9" width="1" height="1.2" fill="#3a3c3e"/><rect x="358" y="16.6" width="1" height="5.7" fill="#3a3c3e"/><rect x="359" y="18.9" width="1" height="1.2" fill="#3a3c3e"/><rect x="360" y="18.1" width="1" height="2.8" fill="#3a3c3e"/><rect x="361" y="18.9" width="1" height="1.2" fill="#3a3c3e"/><rect x="362" y="14.1" width="1" height="10.8" fill="#3a3c3e"/><rect x="363" y="18.1" width="1" height="2.8" fill="#3a3c3e"/><rect x="364" y="18.5" width="1" height="2.0" fill="#3a3c3e"/><rect x="365" y="18.8" width="1" height="1.4" fill="#3a3c3e"/><rect x="366" y="18.1" width="1" height="2.9" fill="#3a3c3e"/><rect x="367" y="14.3" width="1" height="10.4" fill="#3a3c3e"/><rect x="368" y="18.5" width="1" height="2.0" fill="#3a3c3e"/><rect x="369" y="18.9" width="1" height="1.3" fill="#3a3c3e"/><rect x="370" y="18.2" width="1" height="2.6" fill="#3a3c3e"/><rect x="371" y="15.0" width="1" height="8.9" fill="#3a3c3e"/><rect x="372" y="18.6" width="1" height="1.8" fill="#3a3c3e"/><rect x="80" y="0" width="1.5" height="40" fill="#d0312d"/><rect x="0.5" y="0.5" width="154" height="39" fill="none" stroke="#e8e8e8" stroke-width="1.5"/></svg>
<svg class="abs" style="left:1012px;top:382px" width="373" height="171" viewBox="0 0 373 171"><rect x="0" y="0" width="373" height="171" fill="#22564a"/><defs><clipPath id="c1"><polygon points="0.0,10.3 1.0,7.5 2.0,7.1 3.0,14.5 4.0,7.5 5.0,11.5 6.0,25.9 7.0,8.2 8.0,41.6 9.0,25.2 10.0,7.1 11.0,3.3 12.0,16.6 13.0,8.1 14.0,9.5 15.0,8.0 16.0,12.8 17.0,10.8 18.0,19.2 19.0,24.0 20.0,24.5 21.0,8.3 22.0,20.4 23.0,8.1 24.0,7.2 25.0,12.8 26.0,2.7 27.0,7.1 28.0,18.4 29.0,9.8 30.0,12.8 31.0,16.5 32.0,41.6 33.0,15.6 34.0,8.4 35.0,10.2 36.0,18.8 37.0,7.2 38.0,8.1 39.0,13.8 40.0,3.7 41.0,0.6 42.0,2.6 43.0,24.3 44.0,10.6 45.0,11.5 46.0,7.1 47.0,22.4 48.0,10.5 49.0,16.2 50.0,18.3 51.0,10.1 52.0,18.6 53.0,11.4 54.0,23.9 55.0,14.1 56.0,20.1 57.0,12.6 58.0,24.7 59.0,15.4 60.0,8.1 61.0,10.7 62.0,0.8 63.0,13.6 64.0,7.5 65.0,7.3 66.0,13.4 67.0,8.5 68.0,7.2 69.0,9.8 70.0,7.6 71.0,17.3 72.0,7.0 73.0,7.6 74.0,24.0 75.0,41.6 76.0,10.3 77.0,7.0 78.0,9.6 79.0,22.5 80.0,21.3 81.0,7.1 82.0,13.7 83.0,12.5 84.0,41.6 85.0,0.8 86.0,12.1 87.0,18.9 88.0,10.6 89.0,11.6 90.0,8.2 91.0,7.3 92.0,25.5 93.0,24.9 94.0,25.1 95.0,2.2 96.0,8.0 97.0,24.1 98.0,13.8 99.0,14.0 100.0,0.3 101.0,11.9 102.0,9.2 103.0,7.1 104.0,9.9 105.0,8.6 106.0,7.1 107.0,15.3 108.0,7.1 109.0,9.0 110.0,22.8 111.0,8.5 112.0,9.1 113.0,18.5 114.0,41.6 115.0,24.6 116.0,7.1 117.0,7.3 118.0,11.5 119.0,11.0 120.0,19.5 121.0,24.3 122.0,9.8 123.0,7.6 124.0,14.3 125.0,0.5 126.0,13.1 127.0,8.5 128.0,22.6 129.0,7.0 130.0,8.1 131.0,18.5 132.0,8.0 133.0,11.8 134.0,19.3 135.0,10.6 136.0,9.8 137.0,11.6 138.0,8.4 139.0,9.5 140.0,9.2 141.0,25.7 142.0,11.9 143.0,7.6 144.0,8.7 145.0,15.9 146.0,7.7 147.0,9.9 148.0,41.6 149.0,18.3 150.0,14.4 151.0,13.4 152.0,11.1 153.0,19.8 154.0,7.9 155.0,10.5 156.0,12.3 157.0,13.2 158.0,12.6 159.0,7.4 160.0,16.7 161.0,7.3 162.0,12.5 163.0,24.3 164.0,17.3 165.0,9.7 166.0,10.0 167.0,16.6 168.0,7.2 169.0,7.8 170.0,24.6 171.0,17.0 172.0,41.6 173.0,7.0 174.0,3.8 175.0,10.7 176.0,19.9 177.0,7.6 178.0,8.5 179.0,23.5 180.0,7.5 181.0,14.7 182.0,14.8 183.0,11.7 184.0,18.7 185.0,12.1 186.0,9.3 187.0,9.0 188.0,15.2 189.0,13.4 190.0,7.8 191.0,13.1 192.0,7.0 193.0,7.1 194.0,7.3 195.0,8.0 196.0,7.3 197.0,9.1 198.0,25.4 199.0,7.3 200.0,25.8 201.0,7.8 202.0,1.7 203.0,20.8 204.0,9.3 205.0,7.4 206.0,25.7 207.0,15.4 208.0,9.4 209.0,23.5 210.0,8.6 211.0,1.7 212.0,7.0 213.0,8.0 214.0,16.0 215.0,8.8 216.0,18.9 217.0,15.4 218.0,7.1 219.0,11.1 220.0,14.7 221.0,12.8 222.0,7.0 223.0,41.6 224.0,8.0 225.0,9.0 226.0,9.7 227.0,0.6 228.0,7.3 229.0,12.0 230.0,13.7 231.0,21.6 232.0,19.4 233.0,8.2 234.0,7.4 235.0,15.8 236.0,20.9 237.0,9.4 238.0,17.4 239.0,13.7 240.0,41.6 241.0,7.2 242.0,3.0 243.0,25.7 244.0,9.2 245.0,13.6 246.0,18.6 247.0,10.9 248.0,13.8 249.0,7.0 250.0,10.8 251.0,18.9 252.0,8.1 253.0,41.6 254.0,9.0 255.0,7.0 256.0,18.7 257.0,9.6 258.0,9.4 259.0,8.9 260.0,16.8 261.0,7.1 262.0,8.6 263.0,17.2 264.0,9.6 265.0,8.6 266.0,9.2 267.0,13.8 268.0,10.3 269.0,12.6 270.0,13.1 271.0,8.5 272.0,25.6 273.0,19.6 274.0,16.0 275.0,7.5 276.0,11.0 277.0,22.3 278.0,8.8 279.0,20.3 280.0,13.9 281.0,7.0 282.0,15.5 283.0,7.2 284.0,15.4 285.0,13.9 286.0,23.6 287.0,21.1 288.0,9.4 289.0,8.2 290.0,7.9 291.0,8.8 292.0,21.9 293.0,8.8 294.0,9.0 295.0,25.0 296.0,25.9 297.0,25.6 298.0,7.1 299.0,19.0 300.0,20.6 301.0,11.8 302.0,12.5 303.0,7.9 304.0,10.4 305.0,11.6 306.0,7.0 307.0,0.5 308.0,7.0 309.0,8.6 310.0,11.2 311.0,9.1 312.0,7.0 313.0,7.7 314.0,41.6 315.0,13.0 316.0,13.4 317.0,7.0 318.0,20.6 319.0,19.7 320.0,7.0 321.0,3.9 322.0,15.1 323.0,17.1 324.0,16.6 325.0,7.2 326.0,7.6 327.0,1.8 328.0,15.4 329.0,12.9 330.0,11.5 331.0,10.8 332.0,16.5 333.0,16.1 334.0,10.4 335.0,2.9 336.0,24.0 337.0,7.5 338.0,22.0 339.0,8.3 340.0,11.8 341.0,8.1 342.0,20.6 343.0,14.6 344.0,18.2 345.0,11.2 346.0,23.6 347.0,7.2 348.0,2.4 349.0,11.5 350.0,11.1 351.0,10.9 352.0,8.7 353.0,41.6 354.0,13.5 355.0,7.0 356.0,15.4 357.0,7.1 358.0,3.2 359.0,15.0 360.0,7.9 361.0,8.0 362.0,8.4 363.0,7.1 364.0,9.1 365.0,18.3 366.0,13.0 367.0,7.0 368.0,23.3 369.0,7.5 370.0,10.3 371.0,7.5 372.0,11.6 373.0,7.1 373.0,76.6 372.0,67.5 371.0,76.6 370.0,76.9 369.0,63.6 368.0,77.7 367.0,77.4 366.0,82.9 365.0,66.7 364.0,59.4 363.0,77.3 362.0,70.0 361.0,63.8 360.0,76.3 359.0,63.6 358.0,72.1 357.0,65.3 356.0,43.4 355.0,84.9 354.0,77.9 353.0,74.1 352.0,60.0 351.0,72.7 350.0,75.2 349.0,77.5 348.0,69.7 347.0,63.9 346.0,62.9 345.0,77.2 344.0,75.9 343.0,81.1 342.0,73.0 341.0,73.7 340.0,77.1 339.0,43.4 338.0,75.9 337.0,77.8 336.0,77.9 335.0,72.9 334.0,67.8 333.0,72.7 332.0,78.0 331.0,69.4 330.0,65.0 329.0,77.6 328.0,77.9 327.0,70.0 326.0,65.1 325.0,60.9 324.0,65.3 323.0,74.9 322.0,77.9 321.0,81.9 320.0,71.3 319.0,65.7 318.0,69.9 317.0,76.9 316.0,73.9 315.0,71.9 314.0,43.4 313.0,76.5 312.0,73.3 311.0,76.0 310.0,76.7 309.0,63.4 308.0,77.0 307.0,60.4 306.0,68.4 305.0,64.2 304.0,64.7 303.0,77.3 302.0,73.6 301.0,76.6 300.0,78.0 299.0,43.4 298.0,71.3 297.0,77.7 296.0,75.5 295.0,65.4 294.0,70.1 293.0,78.0 292.0,75.8 291.0,72.0 290.0,63.1 289.0,76.7 288.0,74.7 287.0,70.0 286.0,77.2 285.0,75.3 284.0,76.6 283.0,76.0 282.0,69.5 281.0,71.1 280.0,77.5 279.0,77.9 278.0,77.8 277.0,75.9 276.0,64.5 275.0,77.9 274.0,74.7 273.0,59.3 272.0,65.0 271.0,75.4 270.0,74.4 269.0,71.2 268.0,75.7 267.0,77.8 266.0,71.4 265.0,59.4 264.0,76.9 263.0,75.0 262.0,77.4 261.0,82.9 260.0,73.0 259.0,76.4 258.0,66.0 257.0,82.6 256.0,59.6 255.0,66.6 254.0,84.1 253.0,77.6 252.0,59.2 251.0,72.9 250.0,64.1 249.0,76.6 248.0,74.2 247.0,78.0 246.0,77.9 245.0,75.6 244.0,65.1 243.0,78.0 242.0,78.0 241.0,71.1 240.0,72.1 239.0,77.8 238.0,72.5 237.0,68.9 236.0,77.1 235.0,67.2 234.0,78.0 233.0,77.2 232.0,74.0 231.0,69.5 230.0,60.3 229.0,74.0 228.0,43.4 227.0,76.6 226.0,65.4 225.0,67.3 224.0,74.4 223.0,76.1 222.0,73.9 221.0,83.4 220.0,76.2 219.0,75.4 218.0,78.0 217.0,64.1 216.0,70.1 215.0,78.0 214.0,64.2 213.0,77.7 212.0,73.0 211.0,78.0 210.0,63.6 209.0,43.4 208.0,76.9 207.0,78.0 206.0,77.4 205.0,74.4 204.0,76.1 203.0,74.5 202.0,78.0 201.0,75.9 200.0,77.3 199.0,75.1 198.0,84.0 197.0,78.0 196.0,66.8 195.0,65.7 194.0,76.5 193.0,73.0 192.0,74.9 191.0,63.9 190.0,72.3 189.0,67.2 188.0,77.6 187.0,73.6 186.0,77.6 185.0,83.1 184.0,67.7 183.0,71.8 182.0,77.9 181.0,77.3 180.0,70.3 179.0,77.3 178.0,69.0 177.0,84.6 176.0,77.6 175.0,62.1 174.0,73.9 173.0,75.5 172.0,77.1 171.0,77.9 170.0,75.2 169.0,77.2 168.0,82.1 167.0,76.6 166.0,78.0 165.0,62.7 164.0,59.2 163.0,75.3 162.0,78.0 161.0,77.6 160.0,84.2 159.0,70.4 158.0,72.9 157.0,76.8 156.0,62.6 155.0,77.8 154.0,76.4 153.0,71.2 152.0,59.5 151.0,62.8 150.0,73.7 149.0,78.0 148.0,75.5 147.0,67.4 146.0,75.4 145.0,65.2 144.0,77.7 143.0,61.2 142.0,75.6 141.0,71.5 140.0,43.4 139.0,43.4 138.0,76.0 137.0,76.5 136.0,65.5 135.0,64.5 134.0,68.9 133.0,78.0 132.0,71.0 131.0,77.7 130.0,83.0 129.0,75.7 128.0,60.8 127.0,74.2 126.0,76.8 125.0,77.3 124.0,78.0 123.0,83.7 122.0,59.4 121.0,69.1 120.0,66.2 119.0,69.1 118.0,76.3 117.0,77.1 116.0,63.0 115.0,78.0 114.0,73.6 113.0,72.6 112.0,75.6 111.0,63.1 110.0,74.9 109.0,77.8 108.0,69.5 107.0,77.9 106.0,77.9 105.0,62.2 104.0,75.9 103.0,71.3 102.0,76.2 101.0,70.0 100.0,75.1 99.0,77.1 98.0,69.7 97.0,77.8 96.0,67.1 95.0,74.8 94.0,77.8 93.0,61.5 92.0,62.7 91.0,63.0 90.0,78.0 89.0,76.8 88.0,81.0 87.0,81.1 86.0,72.5 85.0,77.9 84.0,71.5 83.0,59.0 82.0,70.2 81.0,78.0 80.0,67.5 79.0,65.9 78.0,59.7 77.0,69.2 76.0,77.5 75.0,69.3 74.0,76.4 73.0,61.9 72.0,72.5 71.0,77.5 70.0,60.3 69.0,43.4 68.0,77.0 67.0,77.3 66.0,68.2 65.0,70.9 64.0,75.8 63.0,77.8 62.0,69.7 61.0,71.4 60.0,75.0 59.0,75.3 58.0,66.3 57.0,43.4 56.0,64.7 55.0,72.7 54.0,73.4 53.0,69.6 52.0,66.8 51.0,81.6 50.0,64.5 49.0,59.8 48.0,68.7 47.0,63.7 46.0,77.8 45.0,75.6 44.0,76.9 43.0,43.4 42.0,71.1 41.0,78.0 40.0,69.1 39.0,65.1 38.0,76.9 37.0,64.8 36.0,75.7 35.0,70.2 34.0,77.6 33.0,43.4 32.0,71.8 31.0,72.2 30.0,70.9 29.0,72.4 28.0,69.7 27.0,62.9 26.0,68.5 25.0,78.0 24.0,59.8 23.0,77.6 22.0,43.4 21.0,77.9 20.0,77.0 19.0,75.2 18.0,68.2 17.0,77.5 16.0,75.8 15.0,76.7 14.0,77.9 13.0,76.6 12.0,77.8 11.0,72.7 10.0,67.7 9.0,71.1 8.0,77.4 7.0,75.5 6.0,69.1 5.0,70.3 4.0,74.5 3.0,78.0 2.0,78.0 1.0,66.6 0.0,74.5"/></clipPath><clipPath id="c2"><polygon points="0.0,96.3 1.0,103.7 2.0,95.8 3.0,100.4 4.0,96.8 5.0,93.2 6.0,93.4 7.0,89.1 8.0,94.8 9.0,96.9 10.0,97.0 11.0,97.6 12.0,87.9 13.0,96.4 14.0,124.4 15.0,86.2 16.0,93.0 17.0,97.2 18.0,93.3 19.0,100.7 20.0,100.6 21.0,109.2 22.0,95.5 23.0,94.9 24.0,103.3 25.0,93.1 26.0,99.0 27.0,95.4 28.0,100.7 29.0,96.5 30.0,124.4 31.0,95.7 32.0,96.1 33.0,104.3 34.0,99.9 35.0,94.4 36.0,97.5 37.0,98.5 38.0,99.4 39.0,93.9 40.0,93.3 41.0,104.4 42.0,93.2 43.0,86.7 44.0,93.4 45.0,97.3 46.0,99.3 47.0,101.1 48.0,108.4 49.0,104.6 50.0,93.0 51.0,108.6 52.0,96.3 53.0,93.7 54.0,107.6 55.0,93.0 56.0,94.6 57.0,99.0 58.0,93.2 59.0,93.1 60.0,98.1 61.0,96.7 62.0,94.9 63.0,95.2 64.0,93.8 65.0,94.1 66.0,98.3 67.0,96.2 68.0,101.4 69.0,89.7 70.0,93.3 71.0,86.5 72.0,95.0 73.0,105.2 74.0,106.8 75.0,106.7 76.0,124.4 77.0,93.1 78.0,97.6 79.0,103.3 80.0,103.4 81.0,99.6 82.0,109.1 83.0,93.4 84.0,99.8 85.0,102.1 86.0,99.0 87.0,97.9 88.0,105.6 89.0,99.8 90.0,93.4 91.0,95.8 92.0,99.8 93.0,96.4 94.0,102.7 95.0,93.3 96.0,93.4 97.0,95.7 98.0,99.6 99.0,93.3 100.0,93.1 101.0,109.2 102.0,93.8 103.0,108.1 104.0,93.5 105.0,93.0 106.0,107.2 107.0,124.4 108.0,93.1 109.0,99.8 110.0,109.4 111.0,94.0 112.0,124.4 113.0,105.3 114.0,93.1 115.0,104.2 116.0,95.2 117.0,93.2 118.0,94.3 119.0,93.2 120.0,93.6 121.0,103.2 122.0,93.1 123.0,93.4 124.0,93.1 125.0,100.9 126.0,90.1 127.0,108.7 128.0,98.1 129.0,102.6 130.0,101.4 131.0,97.7 132.0,95.7 133.0,100.3 134.0,108.1 135.0,99.1 136.0,105.4 137.0,93.0 138.0,95.9 139.0,100.0 140.0,93.8 141.0,105.1 142.0,95.7 143.0,96.6 144.0,93.2 145.0,98.9 146.0,99.5 147.0,95.9 148.0,93.4 149.0,103.9 150.0,96.0 151.0,95.5 152.0,104.4 153.0,100.5 154.0,93.2 155.0,96.4 156.0,101.2 157.0,93.9 158.0,105.9 159.0,93.0 160.0,96.0 161.0,101.7 162.0,95.4 163.0,98.8 164.0,95.9 165.0,94.9 166.0,98.0 167.0,93.1 168.0,93.8 169.0,98.8 170.0,93.3 171.0,96.6 172.0,97.7 173.0,104.1 174.0,106.6 175.0,93.0 176.0,93.1 177.0,124.4 178.0,96.9 179.0,94.6 180.0,97.1 181.0,99.1 182.0,106.7 183.0,88.3 184.0,93.3 185.0,93.0 186.0,93.1 187.0,103.4 188.0,95.1 189.0,97.2 190.0,94.8 191.0,97.8 192.0,94.7 193.0,94.6 194.0,109.2 195.0,93.2 196.0,124.4 197.0,93.1 198.0,103.1 199.0,103.7 200.0,100.1 201.0,89.0 202.0,96.6 203.0,93.8 204.0,107.3 205.0,93.0 206.0,94.0 207.0,98.2 208.0,93.1 209.0,104.5 210.0,94.7 211.0,93.3 212.0,101.8 213.0,95.2 214.0,99.2 215.0,93.9 216.0,93.3 217.0,104.2 218.0,86.4 219.0,96.6 220.0,107.8 221.0,95.1 222.0,87.9 223.0,107.4 224.0,94.7 225.0,102.4 226.0,94.0 227.0,97.0 228.0,101.7 229.0,93.9 230.0,99.3 231.0,101.7 232.0,101.1 233.0,106.1 234.0,107.5 235.0,93.0 236.0,94.0 237.0,94.5 238.0,93.0 239.0,124.4 240.0,95.4 241.0,93.3 242.0,93.5 243.0,105.0 244.0,93.8 245.0,106.9 246.0,94.0 247.0,89.3 248.0,95.2 249.0,93.8 250.0,93.0 251.0,124.4 252.0,93.1 253.0,94.8 254.0,93.0 255.0,105.3 256.0,95.9 257.0,101.7 258.0,98.2 259.0,97.8 260.0,93.8 261.0,93.0 262.0,93.0 263.0,99.1 264.0,99.2 265.0,94.5 266.0,104.2 267.0,93.1 268.0,93.2 269.0,102.7 270.0,93.1 271.0,102.1 272.0,108.6 273.0,98.7 274.0,95.0 275.0,93.1 276.0,93.1 277.0,93.4 278.0,93.1 279.0,90.0 280.0,95.8 281.0,93.2 282.0,107.0 283.0,93.1 284.0,94.5 285.0,100.3 286.0,93.1 287.0,100.0 288.0,95.9 289.0,87.2 290.0,99.9 291.0,99.4 292.0,93.0 293.0,95.3 294.0,99.9 295.0,93.5 296.0,101.3 297.0,93.3 298.0,96.7 299.0,93.0 300.0,98.6 301.0,94.6 302.0,93.7 303.0,94.9 304.0,96.3 305.0,96.0 306.0,93.4 307.0,98.3 308.0,101.1 309.0,101.8 310.0,93.7 311.0,106.1 312.0,89.1 313.0,100.1 314.0,93.2 315.0,96.8 316.0,94.1 317.0,93.0 318.0,89.3 319.0,97.1 320.0,106.0 321.0,106.4 322.0,97.9 323.0,101.1 324.0,94.8 325.0,95.0 326.0,94.2 327.0,93.3 328.0,93.7 329.0,105.2 330.0,99.9 331.0,109.4 332.0,94.1 333.0,105.8 334.0,93.5 335.0,88.4 336.0,102.2 337.0,108.1 338.0,93.8 339.0,96.2 340.0,86.9 341.0,93.2 342.0,103.0 343.0,99.9 344.0,93.6 345.0,98.5 346.0,99.1 347.0,106.0 348.0,93.4 349.0,108.4 350.0,103.9 351.0,93.7 352.0,93.1 353.0,93.1 354.0,102.6 355.0,106.1 356.0,98.0 357.0,124.4 358.0,98.0 359.0,93.7 360.0,105.4 361.0,106.9 362.0,96.3 363.0,93.0 364.0,95.0 365.0,88.7 366.0,95.4 367.0,102.0 368.0,93.3 369.0,88.0 370.0,93.6 371.0,93.0 372.0,109.1 373.0,93.0 373.0,150.5 372.0,168.8 371.0,163.0 370.0,158.3 369.0,162.5 368.0,160.5 367.0,161.1 366.0,156.4 365.0,168.4 364.0,154.5 363.0,163.9 362.0,163.3 361.0,163.2 360.0,162.3 359.0,156.3 358.0,163.0 357.0,162.6 356.0,154.6 355.0,153.8 354.0,159.7 353.0,169.5 352.0,167.4 351.0,161.1 350.0,162.1 349.0,153.0 348.0,153.5 347.0,160.4 346.0,162.6 345.0,163.9 344.0,161.1 343.0,156.5 342.0,161.1 341.0,164.0 340.0,161.0 339.0,163.1 338.0,163.9 337.0,152.9 336.0,154.4 335.0,164.0 334.0,157.9 333.0,163.9 332.0,162.4 331.0,156.6 330.0,158.5 329.0,163.2 328.0,162.7 327.0,157.2 326.0,156.0 325.0,159.3 324.0,163.5 323.0,163.6 322.0,162.6 321.0,163.9 320.0,158.3 319.0,162.4 318.0,156.1 317.0,159.6 316.0,159.7 315.0,164.0 314.0,163.2 313.0,153.3 312.0,163.9 311.0,164.0 310.0,154.5 309.0,158.9 308.0,163.9 307.0,161.9 306.0,169.9 305.0,163.9 304.0,147.0 303.0,163.3 302.0,157.5 301.0,166.8 300.0,164.0 299.0,149.7 298.0,152.4 297.0,164.0 296.0,163.0 295.0,162.2 294.0,152.6 293.0,168.9 292.0,164.0 291.0,161.3 290.0,148.2 289.0,163.9 288.0,150.8 287.0,152.5 286.0,156.5 285.0,163.7 284.0,156.0 283.0,162.6 282.0,152.2 281.0,162.6 280.0,160.0 279.0,162.4 278.0,159.0 277.0,152.3 276.0,148.8 275.0,151.9 274.0,161.5 273.0,159.4 272.0,163.5 271.0,163.4 270.0,157.8 269.0,163.1 268.0,161.8 267.0,163.6 266.0,158.7 265.0,159.3 264.0,157.6 263.0,156.0 262.0,168.8 261.0,163.5 260.0,163.5 259.0,159.6 258.0,154.8 257.0,162.2 256.0,154.9 255.0,169.5 254.0,151.6 253.0,157.7 252.0,170.6 251.0,162.7 250.0,158.1 249.0,163.4 248.0,163.2 247.0,147.6 246.0,162.4 245.0,161.4 244.0,159.8 243.0,163.8 242.0,156.1 241.0,147.3 240.0,162.3 239.0,132.6 238.0,154.1 237.0,153.3 236.0,162.9 235.0,154.1 234.0,163.7 233.0,170.8 232.0,156.7 231.0,164.0 230.0,163.0 229.0,163.9 228.0,162.0 227.0,162.6 226.0,164.0 225.0,161.2 224.0,163.1 223.0,164.0 222.0,163.6 221.0,164.0 220.0,155.4 219.0,154.8 218.0,152.7 217.0,163.9 216.0,160.1 215.0,132.6 214.0,152.1 213.0,162.7 212.0,148.6 211.0,163.8 210.0,148.7 209.0,155.4 208.0,158.0 207.0,162.6 206.0,160.6 205.0,160.4 204.0,151.4 203.0,163.1 202.0,162.6 201.0,164.0 200.0,163.5 199.0,159.3 198.0,161.7 197.0,162.7 196.0,163.7 195.0,152.0 194.0,162.5 193.0,164.0 192.0,160.4 191.0,163.9 190.0,151.0 189.0,168.6 188.0,152.6 187.0,159.3 186.0,158.5 185.0,158.8 184.0,158.9 183.0,159.9 182.0,150.8 181.0,149.6 180.0,147.7 179.0,164.0 178.0,162.7 177.0,169.2 176.0,153.4 175.0,156.7 174.0,164.0 173.0,148.6 172.0,151.5 171.0,163.4 170.0,159.6 169.0,158.5 168.0,162.0 167.0,151.1 166.0,155.8 165.0,158.1 164.0,163.8 163.0,160.9 162.0,160.9 161.0,153.1 160.0,155.1 159.0,160.2 158.0,155.2 157.0,163.1 156.0,152.0 155.0,162.6 154.0,158.9 153.0,155.1 152.0,155.8 151.0,163.8 150.0,161.8 149.0,153.6 148.0,152.2 147.0,156.5 146.0,164.0 145.0,148.1 144.0,164.0 143.0,163.4 142.0,163.8 141.0,159.6 140.0,160.5 139.0,159.3 138.0,167.0 137.0,132.6 136.0,163.8 135.0,168.3 134.0,155.9 133.0,164.0 132.0,162.4 131.0,163.4 130.0,163.6 129.0,163.3 128.0,157.9 127.0,157.4 126.0,147.6 125.0,161.5 124.0,164.0 123.0,163.6 122.0,162.3 121.0,163.4 120.0,156.6 119.0,147.6 118.0,161.4 117.0,164.0 116.0,163.6 115.0,167.3 114.0,161.1 113.0,156.3 112.0,163.3 111.0,163.1 110.0,150.1 109.0,155.2 108.0,163.1 107.0,162.5 106.0,163.9 105.0,162.8 104.0,163.6 103.0,167.5 102.0,163.9 101.0,163.8 100.0,156.4 99.0,160.5 98.0,163.7 97.0,148.4 96.0,147.4 95.0,163.7 94.0,152.2 93.0,160.1 92.0,163.4 91.0,164.0 90.0,156.7 89.0,163.8 88.0,164.0 87.0,147.5 86.0,160.5 85.0,132.6 84.0,156.2 83.0,147.8 82.0,163.8 81.0,163.9 80.0,154.2 79.0,147.4 78.0,132.6 77.0,159.2 76.0,160.4 75.0,163.6 74.0,153.8 73.0,159.8 72.0,149.4 71.0,163.7 70.0,162.7 69.0,161.9 68.0,158.1 67.0,154.9 66.0,160.9 65.0,163.5 64.0,156.9 63.0,163.9 62.0,162.8 61.0,161.7 60.0,162.3 59.0,163.6 58.0,155.1 57.0,163.3 56.0,147.4 55.0,155.5 54.0,149.7 53.0,148.7 52.0,161.4 51.0,164.0 50.0,156.6 49.0,163.9 48.0,161.7 47.0,160.4 46.0,161.9 45.0,157.4 44.0,158.3 43.0,155.9 42.0,132.6 41.0,162.2 40.0,148.1 39.0,161.9 38.0,154.0 37.0,150.6 36.0,153.5 35.0,162.7 34.0,156.7 33.0,154.7 32.0,163.2 31.0,160.3 30.0,162.2 29.0,157.0 28.0,132.6 27.0,163.8 26.0,156.2 25.0,149.4 24.0,159.7 23.0,164.0 22.0,153.9 21.0,149.9 20.0,161.5 19.0,162.9 18.0,163.0 17.0,163.1 16.0,152.7 15.0,147.6 14.0,163.1 13.0,149.7 12.0,163.0 11.0,164.0 10.0,161.9 9.0,164.0 8.0,163.9 7.0,147.9 6.0,161.5 5.0,163.7 4.0,148.9 3.0,170.7 2.0,164.0 1.0,159.3 0.0,169.4"/></clipPath></defs><g clip-path="url(#c1)"><rect x="0" y="0" width="373" height="86" fill="#2ec39f"/><rect x="67" y="0" width="88" height="86" fill="#36b6cf"/></g><g clip-path="url(#c2)"><rect x="0" y="86" width="373" height="85" fill="#33d07a"/><rect x="67" y="86" width="88" height="85" fill="#36b6cf"/></g><rect x="0" y="42" width="373" height="1" fill="#25937c" opacity=".8"/><rect x="0" y="128" width="373" height="1" fill="#27a062" opacity=".8"/><rect x="0" y="85" width="373" height="1.5" fill="#1d2a26"/><rect x="29.5" y="0" width="1.2" height="171" fill="#1e4f43" opacity=".75"/><rect x="84.0" y="0" width="1.2" height="171" fill="#1e4f43" opacity=".75"/><rect x="144.6" y="0" width="1.2" height="171" fill="#1e4f43" opacity=".75"/><rect x="183.0" y="0" width="1.2" height="171" fill="#1e4f43" opacity=".75"/><rect x="270.0" y="0" width="1.2" height="171" fill="#1e4f43" opacity=".75"/><rect x="315.0" y="0" width="1.2" height="171" fill="#1e4f43" opacity=".75"/><rect x="331.7" y="0" width="1.2" height="171" fill="#1e4f43" opacity=".75"/><rect x="193" y="0" width="2" height="171" fill="#e01b1b"/></svg>
<div class="abs" style="left:1012px;top:553px;width:373px;height:18px;background:#1c1f21"></div>
<div class="abs" style="left:1079px;top:553px;width:89px;height:18px;background:#7c6fd6"></div>
<div class="abs" style="left:1079px;top:553px;width:89px;height:8px;background:#6a3f8f"></div>
<div class="t" style="left:1023px;top:584px">1:1</div>
<div class="t" style="left:1022px;top:615px">Library</div>
<div class="abs" style="left:1076px;top:610px;width:83px;height:23px;background:#2a2e32;border:1px solid #3b3f43;border-bottom:3px solid #1e4d6a;border-radius:0 0 4px 4px"></div>
<div class="t" style="left:1082px;top:615px">Clip Monitor</div>

<!-- project monitor -->
<div class="abs" style="left:1388px;top:341px;width:374px;height:212px;background:#000"></div>
<div class="abs" style="left:1388px;top:530px;width:67px;height:23px;background:#2a9d2a"></div>
<div class="t" style="left:1391px;top:535px;font-family:'Liberation Mono',monospace;font-size:13px;color:#f0f0f0">In Point</div>
<div class="abs" style="left:1388px;top:553px;width:374px;height:18px;background:#1f2224"></div>
<div class="t" style="left:1399px;top:584px">1:1</div>
<div class="t" style="left:1630px;top:584px;font-family:'Liberation Mono',monospace;font-size:12.8px">00:00:00:00</div>
<div class="abs" style="left:1389px;top:610px;width:103px;height:23px;background:#2a2e32;border:1px solid #3b3f43;border-bottom:3px solid #1e4d6a;border-radius:0 0 4px 4px"></div>
<div class="t" style="left:1393px;top:615px">Project Monitor</div>
<div class="abs" style="left:1494px;top:610px;width:96px;height:23px;background:#2f3337"></div>
<div class="t" style="left:1500px;top:615px">Speech Editor</div>

<!-- timeline -->
<div class="abs" style="left:736px;top:634px;width:1027px;height:1px;background:#3a3e42"></div><div class="abs" style="left:1009px;top:340px;width:1px;height:294px;background:#3a3e42"></div><div class="abs" style="left:1385px;top:340px;width:1px;height:294px;background:#3a3e42"></div>
<div class="t" style="left:743px;top:641px">Timeline</div>
<div class="abs" style="left:737px;top:658px;width:751px;height:1px;background:#3a3e42"></div>
<div class="abs" style="left:770px;top:664px;width:145px;height:27px;background:#2d3135;border:1px solid #464a4f;border-radius:3px"></div>
<div class="t" style="left:791px;top:672px">Normal Mode</div>
<div class="abs" style="left:951px;top:665px;width:25px;height:25px;background:#45494d;border-radius:3px"></div>
<div class="t" style="left:1101px;top:671px;font-family:'Liberation Mono',monospace;font-size:13px">00:00:28:05 / 00:00:00:00</div>
<div class="abs" style="left:737px;top:697px;width:751px;height:1px;background:#44484c"></div>
<div class="t" style="left:787px;top:716px;font-size:12.5px">Sequence</div>
<div class="abs" style="left:872px;top:715px;width:602px;height:24px;background:#232629"></div>
<div class="abs" style="left:872px;top:739px;width:602px;height:1px;background:#3c4044"></div>
<div class="abs" style="left:873px;top:738px;width:51px;height:7px;background:#3a7aa3"></div>
<div class="t" style="left:873px;top:717px;font-size:12.3px;color:#cfd0d1">00:00:00:00</div>
<div class="t" style="left:981px;top:717px;font-size:12.3px;color:#cfd0d1">00:00:06:06</div>
<div class="t" style="left:1088px;top:717px;font-size:12.3px;color:#cfd0d1">00:00:12:12</div>
<div class="t" style="left:1196px;top:717px;font-size:12.3px;color:#cfd0d1">00:00:18:18</div>
<div class="t" style="left:1305px;top:717px;font-size:12.3px;color:#cfd0d1">00:00:24:24</div>
<div class="t" style="left:1413px;top:717px;font-size:12.3px;color:#cfd0d1">00:00:31:05</div>
<!-- tracks -->
<div class="abs" style="left:737px;top:745px;width:135px;height:58px;background:#232629"></div>
<div class="abs" style="left:872px;top:746px;width:600px;height:58px;background:#1f2224"></div>
<div class="abs" style="left:737px;top:804px;width:735px;height:56px;background:#2a4150"></div>
<div class="abs" style="left:737px;top:861px;width:135px;height:26px;background:#232629"></div>
<div class="abs" style="left:872px;top:861px;width:600px;height:17px;background:#1f2224"></div>
<div class="abs" style="left:737px;top:862px;width:18px;height:25px;background:#4ccf7e"></div>
<div class="abs" style="left:778px;top:746px;width:19px;height:21px;background:#4ccf7e"></div>
<div class="t" style="left:779px;top:750px;color:#0d3a1c">V2</div>
<div class="abs" style="left:778px;top:804px;width:19px;height:21px;background:#4ccf7e"></div>
<div class="t" style="left:779px;top:808px;color:#0d3a1c">V1</div>
<div class="abs" style="left:778px;top:862px;width:19px;height:21px;background:#4ccf7e"></div>
<div class="t" style="left:779px;top:866px;color:#0d3a1c">A1</div>
<div class="abs" style="left:872px;top:738px;width:1.5px;height:140px;background:#eaeaea"></div>
<div class="abs" style="left:872px;top:878px;width:71px;height:9px;background:#5d6165;border-radius:5px"></div>
<div class="abs" style="left:1473px;top:746px;width:1px;height:134px;background:#5a5e62"></div>
<div class="abs" style="left:1478px;top:747px;width:7px;height:74px;background:#4c5054;border-radius:4px"></div>

<!-- effect stack -->
<div class="abs" style="left:1489px;top:634px;width:1px;height:253px;background:#3a3e42"></div>
<div class="t" style="left:1496px;top:641px">Effect/Composition Stack</div>
<div class="abs" style="left:1492px;top:658px;width:230px;height:1px;background:#3a3e42"></div>
<div class="t" style="left:1494px;top:668px">Bin out.wav effects</div>
<div class="abs" style="left:1492px;top:691px;width:270px;height:90px;background:#1d2023"></div>
<div class="t" style="left:1512px;top:697px;font-weight:bold;color:#7d8184">Volume</div>
<div class="t" style="left:1494px;top:726px;color:#6c7073">Gain</div>
<div class="abs" style="left:1528px;top:731px;width:162px;height:4px;background:#2f3337;border-radius:2px"></div>
<div class="abs" style="left:1626px;top:726px;width:14px;height:14px;background:#3a3e42;border-radius:50%"></div>
<div class="t" style="left:1711px;top:726px;color:#6c7073">0 dB</div>

<!-- status bar -->
<div class="abs" style="left:736px;top:887px;width:1027px;height:1px;background:#44484c"></div>
<div class="t" style="left:1389px;top:894px">Select</div>
<svg class="abs" style="left:756px;top:313px;color:#eceded" width="16" height="16" viewBox="0 0 16 16" fill="none" stroke="currentColor" stroke-width="1.0"><path d="M3.5 14.5v-13h6l3 3v5.5M9.5 1.5v3h3M3.5 14.5h5M11 10.5v4.5M8.8 12.8h4.5"/></svg><svg class="abs" style="left:820px;top:313px;color:#eceded" width="16" height="16" viewBox="0 0 16 16" fill="none" stroke="currentColor" stroke-width="1.0"><path d="M3.5 14.5v-13h6l3 3v5M9.5 1.5v3h3M3.5 14.5h5"/><rect x="8.5" y="10.5" width="5" height="4"/></svg><svg class="abs" style="left:892px;top:314px;color:#eceded" width="14" height="14" viewBox="0 0 16 16" fill="none" stroke="currentColor" stroke-width="1.0"><path d="M3 6l5 4.5L13 6"/></svg><svg class="abs" style="left:917px;top:313px;color:#eceded" width="16" height="16" viewBox="0 0 16 16" fill="none" stroke="currentColor" stroke-width="1.0"><path d="M1.5 1.5h11l2 2v11h-13z"/><path d="M4.5 1.5v4h6v-4M4 14.5V9.5h8v5"/><rect x="8" y="2.5" width="1.5" height="2" fill="currentColor" stroke="none"/></svg><svg class="abs" style="left:990px;top:313px;color:#eceded" width="16" height="16" viewBox="0 0 16 16" fill="none" stroke="currentColor" stroke-width="1.0"><path d="M4 3.5L2 6l2.5 2.2"/><path d="M2.5 6h7a4 4 0 0 1 0 8H6"/></svg><svg class="abs" style="left:1060px;top:313px;color:#6d7074" width="16" height="16" viewBox="0 0 16 16" fill="none" stroke="currentColor" stroke-width="1.0"><path d="M12 3.5L14 6l-2.5 2.2"/><path d="M13.5 6h-7a4 4 0 0 0 0 8H10"/></svg><svg class="abs" style="left:1128px;top:313px;color:#6d7074" width="16" height="16" viewBox="0 0 16 16" fill="none" stroke="currentColor" stroke-width="1.0"><path d="M4 1.5l7 10M12 1.5l-7 10"/><circle cx="4" cy="13" r="1.8"/><circle cx="12" cy="13" r="1.8"/></svg><svg class="abs" style="left:1185px;top:313px;color:#6d7074" width="16" height="16" viewBox="0 0 16 16" fill="none" stroke="currentColor" stroke-width="1.0"><path d="M2.5 1.5h5l2 2v9h-7z"/><path d="M6.5 4.5h5l2 2v8h-7v-2"/></svg><svg class="abs" style="left:1254px;top:313px;color:#eceded" width="16" height="16" viewBox="0 0 16 16" fill="none" stroke="currentColor" stroke-width="1.0"><rect x="2.5" y="2.5" width="11" height="12"/><path d="M5.5 1.5h5v2h-5zM5 7.5h6M5 10h6M5 12.5h3"/></svg><svg class="abs" style="left:1416px;top:314px;color:#eceded" width="14" height="14" viewBox="0 0 16 16" fill="none" stroke="currentColor" stroke-width="1.0"><path d="M3 6l5 4.5L13 6"/></svg><svg class="abs" style="left:745px;top:351px;color:#eceded" width="16" height="16" viewBox="0 0 16 16" fill="none" stroke="currentColor" stroke-width="1.0"><rect x="2.5" y="2.5" width="11" height="11"/><path d="M6.5 5.5v5l4-2.5z" fill="currentColor"/></svg><svg class="abs" style="left:765px;top:352px;color:#eceded" width="14" height="14" viewBox="0 0 16 16" fill="none" stroke="currentColor" stroke-width="1.0"><path d="M3 6l5 4.5L13 6"/></svg><svg class="abs" style="left:784px;top:351px;color:#eceded" width="16" height="16" viewBox="0 0 16 16" fill="none" stroke="currentColor" stroke-width="1.0"><path d="M1.5 13.5v-11h4l1.5 2h7.5v4M1.5 6.5h13M1.5 13.5h7"/><path d="M12 10v5M9.5 12.5h5"/></svg><svg class="abs" style="left:806px;top:351px;color:#da4453" width="16" height="16" viewBox="0 0 16 16" fill="none" stroke="currentColor" stroke-width="1.0"><path d="M3.5 4.5h9v10h-9zM2 4.5h12M6 2h4v2.5H6zM6.5 7v5M9.5 7v5"/></svg><svg class="abs" style="left:829px;top:351px;color:#eceded" width="15" height="15" viewBox="0 0 16 16" fill="none" stroke="currentColor" stroke-width="1.0"><path d="M1.5 7V1.5H7l7.5 7.5-5.5 5.5z" fill="currentColor" stroke="none"/><circle cx="4.5" cy="4.5" r="1.2" fill="#2a2e32" stroke="none"/></svg><svg class="abs" style="left:851px;top:351px;color:#eceded" width="16" height="16" viewBox="0 0 16 16" fill="none" stroke="currentColor" stroke-width="1.0"><path d="M2 3.5h12M2 6.5h12M2 9.5h12M2 12.5h12" stroke-width="1.6"/></svg><svg class="abs" style="left:874px;top:351px;color:#eceded" width="16" height="16" viewBox="0 0 16 16" fill="none" stroke="currentColor" stroke-width="1.0"><path d="M1.5 2.5h13L9.5 8.5v5l-3-2v-3z"/></svg><svg class="abs" style="left:894px;top:352px;color:#eceded" width="14" height="14" viewBox="0 0 16 16" fill="none" stroke="currentColor" stroke-width="1.0"><path d="M3 6l5 4.5L13 6"/></svg><svg class="abs" style="left:993px;top:384px;color:#eceded" width="14" height="14" viewBox="0 0 16 16" fill="none" stroke="currentColor" stroke-width="1.0"><path d="M3 10l5-4.5 5 4.5"/></svg><svg class="abs" style="left:739px;top:407px;color:#eceded" width="12" height="14" viewBox="0 0 16 16" fill="none" stroke="currentColor" stroke-width="1.0"><path d="M6 3l4.5 5L6 13"/></svg><svg class="abs" style="left:985px;top:614px;color:#5a5e62" width="12" height="14" viewBox="0 0 16 16" fill="none" stroke="currentColor" stroke-width="1.0"><path d="M10 3L5.5 8 10 13"/></svg><svg class="abs" style="left:997px;top:614px;color:#eceded" width="12" height="14" viewBox="0 0 16 16" fill="none" stroke="currentColor" stroke-width="1.0"><path d="M6 3l4.5 5L6 13"/></svg><svg class="abs" style="left:1067px;top:582px;color:#eceded" width="14" height="14" viewBox="0 0 16 16" fill="none" stroke="currentColor" stroke-width="1.0"><path d="M3 6l5 4.5L13 6"/></svg><div class="abs" style="left:1087px;top:576px;width:1px;height:28px;background:#44484c"></div><svg class="abs" style="left:1094px;top:581px;color:#eceded" width="16" height="16" viewBox="0 0 16 16" fill="none" stroke="currentColor" stroke-width="1.0"><rect x="2.5" y="2.5" width="11" height="11"/><path d="M6.5 5.5v5l4-2.5z" fill="currentColor"/></svg><div class="abs" style="left:1116px;top:576px;width:1px;height:28px;background:#44484c"></div><svg class="abs" style="left:1122px;top:581px;color:#eceded" width="16" height="16" viewBox="0 0 16 16" fill="none" stroke="currentColor" stroke-width="1.0"><path d="M4.5 2v12M7 8h7M9.5 5.5L7 8l2.5 2.5"/><circle cx="4.5" cy="13" r="1" fill="currentColor"/></svg><svg class="abs" style="left:1144px;top:581px;color:#eceded" width="16" height="16" viewBox="0 0 16 16" fill="none" stroke="currentColor" stroke-width="1.0"><path d="M11.5 2v12M2 8h7M6.5 5.5L9 8l-2.5 2.5"/><circle cx="11.5" cy="13" r="1" fill="currentColor"/></svg><svg class="abs" style="left:1167px;top:581px;color:#eceded" width="16" height="16" viewBox="0 0 16 16" fill="none" stroke="currentColor" stroke-width="1.0"><path d="M8 3v10L2 8zM14.5 3v10l-6-5z" fill="currentColor" stroke="none"/></svg><svg class="abs" style="left:1190px;top:581px;color:#eceded" width="16" height="16" viewBox="0 0 16 16" fill="none" stroke="currentColor" stroke-width="1.0"><path d="M3.5 2v12L13.5 8z" fill="currentColor" stroke="none"/></svg><svg class="abs" style="left:1210px;top:582px;color:#eceded" width="14" height="14" viewBox="0 0 16 16" fill="none" stroke="currentColor" stroke-width="1.0"><path d="M3 6l5 4.5L13 6"/></svg><svg class="abs" style="left:1228px;top:581px;color:#eceded" width="16" height="16" viewBox="0 0 16 16" fill="none" stroke="currentColor" stroke-width="1.0"><path d="M1.5 3v10l6-5zM8 3v10l6-5z" fill="currentColor" stroke="none"/></svg><div class="abs" style="left:1249px;top:579px;width:21px;height:21px;background:#45494d;border-radius:4px"></div><svg class="abs" style="left:1252px;top:582px;color:#eceded" width="15" height="15" viewBox="0 0 16 16" fill="none" stroke="currentColor" stroke-width="1.0"><path d="M4.5 1.5v10h10M1.5 4.5h10v10M2 14l12-12"/></svg><div class="abs" style="left:1273px;top:576px;width:1px;height:28px;background:#44484c"></div><svg class="abs" style="left:1365px;top:582px;color:#eceded" width="14" height="14" viewBox="0 0 16 16" fill="none" stroke="currentColor" stroke-width="1.0"><path d="M6 3l4.5 5L6 13"/></svg><svg class="abs" style="left:1446px;top:582px;color:#eceded" width="14" height="14" viewBox="0 0 16 16" fill="none" stroke="currentColor" stroke-width="1.0"><path d="M3 6l5 4.5L13 6"/></svg><div class="abs" style="left:1462px;top:576px;width:1px;height:28px;background:#44484c"></div><svg class="abs" style="left:1470px;top:581px;color:#eceded" width="16" height="16" viewBox="0 0 16 16" fill="none" stroke="currentColor" stroke-width="1.0"><path d="M4.5 2v12M7 8h7M9.5 5.5L7 8l2.5 2.5"/><circle cx="4.5" cy="13" r="1" fill="currentColor"/></svg><svg class="abs" style="left:1492px;top:581px;color:#eceded" width="16" height="16" viewBox="0 0 16 16" fill="none" stroke="currentColor" stroke-width="1.0"><path d="M11.5 2v12M2 8h7M6.5 5.5L9 8l-2.5 2.5"/><circle cx="11.5" cy="13" r="1" fill="currentColor"/></svg><svg class="abs" style="left:1515px;top:581px;color:#eceded" width="16" height="16" viewBox="0 0 16 16" fill="none" stroke="currentColor" stroke-width="1.0"><path d="M8 3v10L2 8zM14.5 3v10l-6-5z" fill="currentColor" stroke="none"/></svg><svg class="abs" style="left:1537px;top:581px;color:#eceded" width="16" height="16" viewBox="0 0 16 16" fill="none" stroke="currentColor" stroke-width="1.0"><path d="M3.5 2v12L13.5 8z" fill="currentColor" stroke="none"/></svg><svg class="abs" style="left:1558px;top:582px;color:#eceded" width="14" height="14" viewBox="0 0 16 16" fill="none" stroke="currentColor" stroke-width="1.0"><path d="M3 6l5 4.5L13 6"/></svg><svg class="abs" style="left:1576px;top:581px;color:#eceded" width="16" height="16" viewBox="0 0 16 16" fill="none" stroke="currentColor" stroke-width="1.0"><path d="M1.5 3v10l6-5zM8 3v10l6-5z" fill="currentColor" stroke="none"/></svg><div class="abs" style="left:1596px;top:579px;width:21px;height:21px;background:#45494d;border-radius:4px"></div><svg class="abs" style="left:1599px;top:582px;color:#eceded" width="15" height="15" viewBox="0 0 16 16" fill="none" stroke="currentColor" stroke-width="1.0"><path d="M4.5 1.5v10h10M1.5 4.5h10v10M2 14l12-12"/></svg><div class="abs" style="left:1620px;top:576px;width:1px;height:28px;background:#44484c"></div><svg class="abs" style="left:1719px;top:580px;color:#eceded" width="14" height="18" viewBox="0 0 16 16" fill="none" stroke="currentColor" stroke-width="1.0"><path d="M4 6l4-4 4 4M4 10l4 4 4-4"/></svg><svg class="abs" style="left:1741px;top:582px;color:#eceded" width="14" height="14" viewBox="0 0 16 16" fill="none" stroke="currentColor" stroke-width="1.0"><path d="M6 3l4.5 5L6 13"/></svg><svg class="abs" style="left:748px;top:670px;color:#eceded" width="15" height="15" viewBox="0 0 16 16" fill="none" stroke="currentColor" stroke-width="1.0"><path d="M1.5 3.5h13M1.5 8h13M1.5 12.5h13" stroke-width="1.6"/></svg><svg class="abs" style="left:777px;top:672px" width="10" height="10" viewBox="0 0 10 10"><rect x="4" y="1" width="2" height="4" fill="#3daee9"/><rect x="1" y="5" width="8" height="3" fill="#eceded"/></svg><svg class="abs" style="left:898px;top:671px;color:#eceded" width="13" height="13" viewBox="0 0 16 16" fill="none" stroke="currentColor" stroke-width="1.0"><path d="M3 6l5 4.5L13 6"/></svg><svg class="abs" style="left:922px;top:670px;color:#eceded" width="16" height="16" viewBox="0 0 16 16" fill="none" stroke="currentColor" stroke-width="1.0"><path d="M3 14L13 2"/><path d="M5 5l2-2 2 2-2 2zM9 11l2-2 2 2-2 2z"/></svg><div class="abs" style="left:946px;top:664px;width:1px;height:28px;background:#44484c"></div><svg class="abs" style="left:955px;top:670px;color:#eceded" width="16" height="16" viewBox="0 0 16 16" fill="none" stroke="currentColor" stroke-width="1.0"><path d="M4 2.5v11l3-3 2.5 4.5 1.5-1-2.5-4.5h4z" fill="currentColor" stroke="none"/></svg><svg class="abs" style="left:983px;top:670px;color:#eceded" width="16" height="16" viewBox="0 0 16 16" fill="none" stroke="currentColor" stroke-width="1.0"><path d="M4 1.5l7 10M12 1.5l-7 10"/><circle cx="4" cy="13" r="1.8"/><circle cx="12" cy="13" r="1.8"/></svg><svg class="abs" style="left:1010px;top:670px;color:#eceded" width="16" height="16" viewBox="0 0 16 16" fill="none" stroke="currentColor" stroke-width="1.0"><rect x="1.5" y="5.5" width="3" height="5"/><rect x="11.5" y="5.5" width="3" height="5"/><path d="M5 8h6"/></svg><svg class="abs" style="left:1037px;top:670px;color:#eceded" width="16" height="16" viewBox="0 0 16 16" fill="none" stroke="currentColor" stroke-width="1.0"><path d="M3.5 2.5h-2v11h2M12.5 2.5h2v11h-2M4.5 8h7M6.5 6L4.5 8l2 2M9.5 6l2 2-2 2"/></svg><svg class="abs" style="left:1064px;top:670px;color:#eceded" width="16" height="16" viewBox="0 0 16 16" fill="none" stroke="currentColor" stroke-width="1.0"><path d="M8 1.5v13M1.5 8h4M10.5 8h4M3.5 6l-2 2 2 2M12.5 6l2 2-2 2"/><rect x="5.5" y="5" width="5" height="6"/></svg><div class="abs" style="left:1090px;top:664px;width:1px;height:28px;background:#44484c"></div><svg class="abs" style="left:1300px;top:671px;color:#eceded" width="14" height="14" viewBox="0 0 16 16" fill="none" stroke="currentColor" stroke-width="1.0"><path d="M3 6l5 4.5L13 6"/></svg><div class="abs" style="left:1321px;top:664px;width:1px;height:28px;background:#44484c"></div><svg class="abs" style="left:1331px;top:670px;color:#eceded" width="15" height="15" viewBox="0 0 16 16" fill="none" stroke="currentColor" stroke-width="1.0"><rect x="1.5" y="1.5" width="13" height="13"/><rect x="2" y="2" width="6" height="6" fill="currentColor" opacity=".6" stroke="none"/><rect x="8" y="8" width="6" height="6" fill="currentColor" opacity=".6" stroke="none"/></svg><svg class="abs" style="left:1358px;top:670px" width="16" height="16" viewBox="0 0 16 16"><rect x="6" y="1" width="3" height="5" fill="#3daee9"/><path d="M4 4.5h7L7.5 8z" fill="#3daee9"/><rect x="1" y="8" width="10" height="5" fill="#eceded"/><path d="M11 8l4 2.5-4 2.5z" fill="#eceded"/></svg><svg class="abs" style="left:1386px;top:670px" width="16" height="16" viewBox="0 0 16 16"><rect x="6.5" y="1" width="3" height="5" fill="#3daee9"/><path d="M4.5 4.5h7L8 8z" fill="#3daee9"/><rect x="1" y="9" width="14" height="4" fill="#eceded"/></svg><svg class="abs" style="left:1413px;top:670px" width="16" height="16" viewBox="0 0 16 16"><rect x="1" y="8" width="4" height="5" fill="#eceded"/><rect x="11" y="8" width="4" height="5" fill="#eceded"/><path d="M6 8.5l3 3M9 8.5l-3 3" stroke="#da4453" stroke-width="1.2"/></svg><svg class="abs" style="left:1441px;top:670px" width="16" height="16" viewBox="0 0 16 16"><rect x="1" y="8" width="4" height="5" fill="#eceded"/><rect x="11" y="8" width="4" height="5" fill="#eceded"/><path d="M6 8.5l3 3M9 8.5l-3 3" stroke="#da4453" stroke-width="1.2"/></svg><svg class="abs" style="left:1469px;top:669px;color:#eceded" width="15" height="17" viewBox="0 0 16 16" fill="none" stroke="currentColor" stroke-width="1.3"><path d="M6 3l4.5 5L6 13"/></svg><div class="abs" style="left:1446px;top:640px;width:13px;height:13px;border:1px solid #4a4e52;border-radius:2px"></div><div class="abs" style="left:1460px;top:640px;width:13px;height:13px;border:1px solid #4a4e52;border-radius:2px"></div><div class="abs" style="left:1474px;top:640px;width:13px;height:13px;border:1px solid #4a4e52;border-radius:2px"></div><svg class="abs" style="left:1448px;top:642px;color:#8a8d90" width="9" height="9" viewBox="0 0 16 16" fill="none" stroke="currentColor" stroke-width="1.0"><path d="M5 1.5h6M6 1.5v5l-2 2.5h8L10 6.5v-5M8 9v5.5"/></svg><svg class="abs" style="left:1462px;top:642px;color:#8a8d90" width="9" height="9" viewBox="0 0 16 16" fill="none" stroke="currentColor" stroke-width="1.0"><rect x="2.5" y="5.5" width="8" height="8"/><path d="M5.5 5.5v-3h8v8h-3"/></svg><svg class="abs" style="left:1476px;top:642px;color:#8a8d90" width="9" height="9" viewBox="0 0 16 16" fill="none" stroke="currentColor" stroke-width="1.0"><path d="M3 3l10 10M13 3L3 13"/></svg><div class="abs" style="left:1719px;top:640px;width:13px;height:13px;border:1px solid #4a4e52;border-radius:2px"></div><div class="abs" style="left:1733px;top:640px;width:13px;height:13px;border:1px solid #4a4e52;border-radius:2px"></div><div class="abs" style="left:1747px;top:640px;width:13px;height:13px;border:1px solid #4a4e52;border-radius:2px"></div><svg class="abs" style="left:1721px;top:642px;color:#8a8d90" width="9" height="9" viewBox="0 0 16 16" fill="none" stroke="currentColor" stroke-width="1.0"><path d="M5 1.5h6M6 1.5v5l-2 2.5h8L10 6.5v-5M8 9v5.5"/></svg><svg class="abs" style="left:1735px;top:642px;color:#8a8d90" width="9" height="9" viewBox="0 0 16 16" fill="none" stroke="currentColor" stroke-width="1.0"><rect x="2.5" y="5.5" width="8" height="8"/><path d="M5.5 5.5v-3h8v8h-3"/></svg><svg class="abs" style="left:1749px;top:642px;color:#8a8d90" width="9" height="9" viewBox="0 0 16 16" fill="none" stroke="currentColor" stroke-width="1.0"><path d="M3 3l10 10M13 3L3 13"/></svg><svg class="abs" style="left:767px;top:713px;color:#eceded" width="15" height="15" viewBox="0 0 16 16" fill="none" stroke="currentColor" stroke-width="1.0"><path d="M1.5 14.5L10 6l1.5 1.5L3 16z" fill="currentColor" stroke="none"/><path d="M10 1v2.5M13.5 4.5H16M5 2.5l1.5 1.5M13 9l1.5 1.5M8 4h1" /></svg><svg class="abs" style="left:759px;top:750px;color:#eceded" width="15" height="15" viewBox="0 0 16 16" fill="none" stroke="currentColor" stroke-width="1.0"><path d="M3 6l5 4.5L13 6"/></svg><svg class="abs" style="left:806px;top:749px;color:#5d6165" width="14" height="14" viewBox="0 0 16 16" fill="none" stroke="currentColor" stroke-width="1.0"><path d="M1.5 14.5L10 6l1.5 1.5L3 16z" fill="currentColor" stroke="none"/><path d="M10 1v2.5M13.5 4.5H16M5 2.5l1.5 1.5M13 9l1.5 1.5M8 4h1" /></svg><svg class="abs" style="left:828px;top:749px;color:#eceded" width="15" height="15" viewBox="0 0 16 16" fill="none" stroke="currentColor" stroke-width="1.0"><rect x="2.5" y="1.5" width="11" height="13"/><path d="M2.5 5.5h11M2.5 10.5h11M5 1.5v13M11 1.5v13"/></svg><svg class="abs" style="left:851px;top:749px;color:#eceded" width="15" height="15" viewBox="0 0 16 16" fill="none" stroke="currentColor" stroke-width="1.0"><rect x="3.5" y="7.5" width="9" height="7"/><path d="M5.5 7.5V5a2.5 2.5 0 0 1 5 0v1"/></svg><svg class="abs" style="left:759px;top:808px;color:#eceded" width="15" height="15" viewBox="0 0 16 16" fill="none" stroke="currentColor" stroke-width="1.0"><path d="M3 6l5 4.5L13 6"/></svg><svg class="abs" style="left:806px;top:807px;color:#5d6165" width="14" height="14" viewBox="0 0 16 16" fill="none" stroke="currentColor" stroke-width="1.0"><path d="M1.5 14.5L10 6l1.5 1.5L3 16z" fill="currentColor" stroke="none"/><path d="M10 1v2.5M13.5 4.5H16M5 2.5l1.5 1.5M13 9l1.5 1.5M8 4h1" /></svg><svg class="abs" style="left:828px;top:807px;color:#eceded" width="15" height="15" viewBox="0 0 16 16" fill="none" stroke="currentColor" stroke-width="1.0"><rect x="2.5" y="1.5" width="11" height="13"/><path d="M2.5 5.5h11M2.5 10.5h11M5 1.5v13M11 1.5v13"/></svg><svg class="abs" style="left:851px;top:807px;color:#eceded" width="15" height="15" viewBox="0 0 16 16" fill="none" stroke="currentColor" stroke-width="1.0"><rect x="3.5" y="7.5" width="9" height="7"/><path d="M5.5 7.5V5a2.5 2.5 0 0 1 5 0v1"/></svg><svg class="abs" style="left:759px;top:866px;color:#eceded" width="15" height="15" viewBox="0 0 16 16" fill="none" stroke="currentColor" stroke-width="1.0"><path d="M3 6l5 4.5L13 6"/></svg><svg class="abs" style="left:806px;top:865px;color:#5d6165" width="14" height="14" viewBox="0 0 16 16" fill="none" stroke="currentColor" stroke-width="1.0"><path d="M1.5 14.5L10 6l1.5 1.5L3 16z" fill="currentColor" stroke="none"/><path d="M10 1v2.5M13.5 4.5H16M5 2.5l1.5 1.5M13 9l1.5 1.5M8 4h1" /></svg><svg class="abs" style="left:828px;top:865px;color:#eceded" width="15" height="15" viewBox="0 0 16 16" fill="none" stroke="currentColor" stroke-width="1.0"><path d="M1.5 5.5h3l4-3.5v12l-4-3.5h-3z" fill="currentColor"/><path d="M11 5a4 4 0 0 1 0 6M12.5 3a6.5 6.5 0 0 1 0 10"/></svg><svg class="abs" style="left:851px;top:865px;color:#eceded" width="15" height="15" viewBox="0 0 16 16" fill="none" stroke="currentColor" stroke-width="1.0"><rect x="3.5" y="7.5" width="9" height="7"/><path d="M5.5 7.5V5a2.5 2.5 0 0 1 5 0v1"/></svg><svg class="abs" style="left:872px;top:0px" width="602" height="740"><rect x="0.0" y="729" width="1" height="10" fill="#8a8d90"/><rect x="36.0" y="734" width="1" height="4" fill="#6a6d70"/><rect x="72.0" y="734" width="1" height="4" fill="#6a6d70"/><rect x="108.1" y="729" width="1" height="10" fill="#8a8d90"/><rect x="144.1" y="734" width="1" height="4" fill="#6a6d70"/><rect x="180.1" y="734" width="1" height="4" fill="#6a6d70"/><rect x="216.2" y="729" width="1" height="10" fill="#8a8d90"/><rect x="252.2" y="734" width="1" height="4" fill="#6a6d70"/><rect x="288.2" y="734" width="1" height="4" fill="#6a6d70"/><rect x="324.3" y="729" width="1" height="10" fill="#8a8d90"/><rect x="360.3" y="734" width="1" height="4" fill="#6a6d70"/><rect x="396.3" y="734" width="1" height="4" fill="#6a6d70"/><rect x="432.4" y="729" width="1" height="10" fill="#8a8d90"/><rect x="468.4" y="734" width="1" height="4" fill="#6a6d70"/><rect x="504.4" y="734" width="1" height="4" fill="#6a6d70"/><rect x="540.5" y="729" width="1" height="10" fill="#8a8d90"/><rect x="576.5" y="734" width="1" height="4" fill="#6a6d70"/></svg><svg class="abs" style="left:872px;top:730px" width="10" height="10" viewBox="0 0 10 10"><path d="M0 0h9L0 9z" fill="#eaeaea"/></svg><div class="abs" style="left:894px;top:737px;width:8px;height:8px;border:1px solid #9fc4dc"></div><svg class="abs" style="left:1012px;top:553px" width="373" height="18"><rect x="8.0" y="13" width="1" height="4" fill="#9a9da0"/><rect x="25.3" y="13" width="1" height="4" fill="#9a9da0"/><rect x="42.6" y="13" width="1" height="4" fill="#9a9da0"/><rect x="59.9" y="9" width="1" height="8" fill="#9a9da0"/><rect x="77.2" y="13" width="1" height="4" fill="#9a9da0"/><rect x="94.5" y="13" width="1" height="4" fill="#9a9da0"/><rect x="111.8" y="13" width="1" height="4" fill="#9a9da0"/><rect x="129.1" y="13" width="1" height="4" fill="#9a9da0"/><rect x="146.4" y="9" width="1" height="8" fill="#9a9da0"/><rect x="163.7" y="13" width="1" height="4" fill="#9a9da0"/><rect x="181.0" y="13" width="1" height="4" fill="#9a9da0"/><rect x="198.3" y="13" width="1" height="4" fill="#9a9da0"/><rect x="215.6" y="13" width="1" height="4" fill="#9a9da0"/><rect x="232.9" y="9" width="1" height="8" fill="#9a9da0"/><rect x="250.2" y="13" width="1" height="4" fill="#9a9da0"/><rect x="267.5" y="13" width="1" height="4" fill="#9a9da0"/><rect x="284.8" y="13" width="1" height="4" fill="#9a9da0"/><rect x="302.1" y="13" width="1" height="4" fill="#9a9da0"/><rect x="319.4" y="9" width="1" height="8" fill="#9a9da0"/><rect x="336.7" y="13" width="1" height="4" fill="#9a9da0"/><path d="M185 0h16l-8 8z" fill="#fff"/></svg><svg class="abs" style="left:1655px;top:667px;color:#eceded" width="15" height="15" viewBox="0 0 16 16" fill="none" stroke="currentColor" stroke-width="1.0"><rect x="1.5" y="4.5" width="6" height="7" rx="1"/><rect x="8.5" y="4.5" width="6" height="7" rx="1"/><path d="M5 8h6"/></svg><svg class="abs" style="left:1676px;top:668px;color:#eceded" width="12" height="13" viewBox="0 0 16 16" fill="none" stroke="currentColor" stroke-width="1.0"><path d="M3 6l5 4.5L13 6"/></svg><svg class="abs" style="left:1694px;top:667px;color:#eceded" width="13" height="13" viewBox="0 0 16 16" fill="none" stroke="currentColor" stroke-width="1.0"><path d="M1.5 1.5h11l2 2v11h-13z"/><path d="M4.5 1.5v4h6v-4M4 14.5V9.5h8v5"/></svg><svg class="abs" style="left:1716px;top:667px;color:#eceded" width="14" height="14" viewBox="0 0 16 16" fill="none" stroke="currentColor" stroke-width="1.4"><rect x="2.5" y="2.5" width="4" height="11"/><rect x="9.5" y="2.5" width="4" height="11"/></svg><svg class="abs" style="left:1738px;top:667px;color:#eceded" width="16" height="16" viewBox="0 0 16 16" fill="none" stroke="currentColor" stroke-width="1.0"><path d="M1.5 8c2-3.5 4.5-5 6.5-5s4.5 1.5 6.5 5c-2 3.5-4.5 5-6.5 5S3.5 11.5 1.5 8z"/><circle cx="8" cy="8" r="2.3"/></svg><svg class="abs" style="left:1494px;top:697px;color:#b0b3b5" width="13" height="13" viewBox="0 0 16 16" fill="none" stroke="currentColor" stroke-width="1.3"><path d="M3 6l5 4.5L13 6"/></svg><svg class="abs" style="left:1631px;top:696px;color:#b0b3b5" width="15" height="15" viewBox="0 0 16 16" fill="none" stroke="currentColor" stroke-width="1.0"><path d="M3 14L13 2"/><path d="M5 5l2-2 2 2-2 2zM9 11l2-2 2 2-2 2z"/></svg><svg class="abs" style="left:1654px;top:696px;color:#b0b3b5" width="15" height="15" viewBox="0 0 16 16" fill="none" stroke="currentColor" stroke-width="1.0"><circle cx="7" cy="7" r="5.5"/><rect x="4.5" y="4.5" width="5" height="5"/><path d="M11 11l3.5 3.5"/></svg><svg class="abs" style="left:1676px;top:696px;color:#b0b3b5" width="15" height="15" viewBox="0 0 16 16" fill="none" stroke="currentColor" stroke-width="1.0"><path d="M3 14L13 2"/><path d="M5 5l2-2 2 2-2 2zM9 11l2-2 2 2-2 2z"/></svg><svg class="abs" style="left:1699px;top:696px;color:#b0b3b5" width="15" height="15" viewBox="0 0 16 16" fill="none" stroke="currentColor" stroke-width="1.0"><path d="M2 4h12M2 8h12M2 12h12"/><circle cx="10" cy="4" r="1.3" fill="currentColor"/><circle cx="5" cy="8" r="1.3" fill="currentColor"/><circle cx="9" cy="12" r="1.3" fill="currentColor"/></svg><svg class="abs" style="left:1721px;top:696px;color:#b0b3b5" width="15" height="15" viewBox="0 0 16 16" fill="none" stroke="currentColor" stroke-width="1.0"><circle cx="8" cy="8" r="6.5"/><path d="M8 7v5M8 4.5v1"/></svg><svg class="abs" style="left:1743px;top:696px;color:#b0b3b5" width="15" height="15" viewBox="0 0 16 16" fill="none" stroke="currentColor" stroke-width="1.0"><path d="M4 2.5L2 5l2.5 2.2"/><path d="M2.5 5h7a4.5 4.5 0 0 1 0 9H8"/></svg><div class="abs" style="left:1442px;top:890px;width:21px;height:20px;background:#31363b;border:1px solid #3f4449;border-radius:3px"></div><div class="abs" style="left:1465px;top:890px;width:20px;height:20px;background:#31363b;border:1px solid #3f4449;border-radius:3px"></div><div class="abs" style="left:1487px;top:890px;width:36px;height:20px;background:#31363b;border:1px solid #3f4449;border-radius:3px"></div><div class="abs" style="left:1526px;top:890px;width:20px;height:20px;background:#31363b;border:1px solid #3f4449;border-radius:3px"></div><div class="abs" style="left:1549px;top:890px;width:20px;height:20px;background:#31363b;border:1px solid #3f4449;border-radius:3px"></div><div class="abs" style="left:1571px;top:890px;width:20px;height:20px;background:#31363b;border:1px solid #3f4449;border-radius:3px"></div><svg class="abs" style="left:1445px;top:893px;color:#eceded" width="14" height="14" viewBox="0 0 16 16" fill="none" stroke="currentColor" stroke-width="1.0"><path d="M1.5 7V1.5H7l7.5 7.5-5.5 5.5z" fill="currentColor" stroke="none"/><circle cx="4.5" cy="4.5" r="1.2" fill="#2a2e32" stroke="none"/></svg><svg class="abs" style="left:1467px;top:893px;color:#eceded" width="14" height="14" viewBox="0 0 16 16" fill="none" stroke="currentColor" stroke-width="1.0"><rect x="2.5" y="1.5" width="11" height="13"/><path d="M2.5 5.5h11M2.5 10.5h11M5 1.5v13M11 1.5v13"/></svg><svg class="abs" style="left:1489px;top:893px;color:#eceded" width="14" height="14" viewBox="0 0 16 16" fill="none" stroke="currentColor" stroke-width="1.0"><path d="M1 8h3l1.5-5 2 10 2-7 1.5 4H15" stroke-width="1.6"/><path d="M13 5.5L15.5 8 13 10.5z" fill="currentColor"/></svg><svg class="abs" style="left:1510px;top:894px;color:#eceded" width="12" height="12" viewBox="0 0 16 16" fill="none" stroke="currentColor" stroke-width="1.0"><path d="M3 6l5 4.5L13 6"/></svg><svg class="abs" style="left:1529px;top:893px;color:#eceded" width="14" height="14" viewBox="0 0 16 16" fill="none" stroke="currentColor" stroke-width="1.0"><path d="M3.5 1.5v13"/><path d="M3.5 2h9l-2 3 2 3h-9z" fill="currentColor" stroke="none"/></svg><svg class="abs" style="left:1552px;top:893px;color:#eceded" width="14" height="14" viewBox="0 0 16 16" fill="none" stroke="currentColor" stroke-width="1.0"><path d="M2 2.5h12M2 13.5h12M4.5 3v10M11.5 3v10M5 5.5h6M8 5.5v5"/></svg><svg class="abs" style="left:1574px;top:893px;color:#eceded" width="14" height="14" viewBox="0 0 16 16" fill="none" stroke="currentColor" stroke-width="1.0"><path d="M3.5 14V7a4.5 4.5 0 0 1 9 0v7M3.5 11h2M10.5 11h2"/></svg><div class="abs" style="left:1596px;top:890px;width:1px;height:20px;background:#44484c"></div><svg class="abs" style="left:1603px;top:893px;color:#eceded" width="14" height="14" viewBox="0 0 16 16" fill="none" stroke="currentColor" stroke-width="1.0"><circle cx="7" cy="7" r="5.5"/><rect x="4.5" y="4.5" width="5" height="5"/><path d="M11 11l3.5 3.5"/></svg><svg class="abs" style="left:1625px;top:893px;color:#eceded" width="14" height="14" viewBox="0 0 16 16" fill="none" stroke="currentColor" stroke-width="1.0"><circle cx="7" cy="7" r="5.5"/><path d="M4.5 7h5M11 11l3.5 3.5"/></svg><div class="abs" style="left:1645px;top:898px;width:78px;height:4px;background:#3a3e42;border-radius:2px"></div><div class="abs" style="left:1690px;top:898px;width:33px;height:4px;background:#2a5a7a;border-radius:2px"></div><div class="abs" style="left:1682px;top:892px;width:16px;height:16px;background:#3a3e42;border-radius:50%;border:1px solid #2a2e32"></div><svg class="abs" style="left:1729px;top:893px;color:#eceded" width="14" height="14" viewBox="0 0 16 16" fill="none" stroke="currentColor" stroke-width="1.0"><circle cx="7" cy="7" r="5.5"/><path d="M4.5 7h5M7 4.5v5M11 11l3.5 3.5"/></svg><div class="abs" style="left:1437px;top:890px;width:1px;height:20px;background:#44484c"></div>
</div>


<!-- BOTTOM BAR -->
<div class="abs" style="left:644px;top:926px;width:50px;height:50px;border-radius:50%;background:#0f70d7"></div>
<div class="abs" style="left:658px;top:950px;width:22px;height:2px;background:#fff"></div>
<div class="abs" style="left:668px;top:940px;width:2px;height:22px;background:#fff"></div>

<div class="abs" style="left:1141px;top:926px;width:51px;height:50px;border-radius:50%;border:1.5px solid #fff"></div>
<svg class="abs" style="left:1154px;top:938px" width="26" height="26" viewBox="0 0 26 26" fill="none" stroke="#fff" stroke-width="1.5" stroke-linecap="round">
  <rect x="8" y="3" width="9" height="15" rx="4.5"/>
  <path d="M4.5 12.5c0 4.5 3.6 8 8 8s8-3.5 8-8"/><path d="M12.5 20.5v3.3M7.5 23.8h10"/><path d="M3.5 22.5L22.5 4"/>
</svg>
<div class="abs" style="left:1176px;top:957px;width:21px;height:21px;border-radius:50%;background:#fff;border:2px solid #06172a"></div>
<svg class="abs" style="left:1180px;top:963px" width="13" height="8" viewBox="0 0 13 8" fill="none" stroke="#8a96a3" stroke-width="1.2"><path d="M2 6l4.5-4 4.5 4"/></svg>
<div class="abs" style="left:1217px;top:926px;width:50px;height:50px;border-radius:50%;background:#0f70d7"></div>
<svg class="abs" style="left:1230px;top:943px" width="26" height="17" viewBox="0 0 26 17" fill="none" stroke="#fff" stroke-width="1.5" stroke-linejoin="round">
  <rect x="2.5" y="2.5" width="13.5" height="11"/><path d="M17.5 7.5l5.5-4v10l-5.5-4z"/>
</svg>
<div class="abs" style="left:1251px;top:957px;width:23px;height:23px;border-radius:50%;background:#fff;border:3px solid #06172a"></div>
<svg class="abs" style="left:1256px;top:964px" width="13" height="8" viewBox="0 0 13 8" fill="none" stroke="#8a96a3" stroke-width="1.2"><path d="M2 6l4.5-4 4.5 4"/></svg>
<div class="abs" style="left:1293px;top:930px;width:2px;height:42px;background:#fff"></div>
<div class="abs" style="left:1320px;top:926px;width:50px;height:50px;border-radius:50%;border:1.5px solid #fff"></div>
<svg class="abs" style="left:1334px;top:940px" width="22" height="24" viewBox="0 0 22 24" fill="none" stroke="#fff" stroke-width="1.4" stroke-linejoin="round" stroke-linecap="round">
  <path d="M7 12V4.5c0-1.2 2-1.2 2 0V11M9 11V2.6c0-1.2 2.2-1.2 2.2 0V11M11.2 11V3.3c0-1.2 2.2-1.2 2.2 0V11M13.4 11V5.2c0-1.2 2.1-1.2 2.1 0v9.3c0 4.5-2.4 7.5-6 7.5-2.6 0-4-1.3-5.4-3.5L1.9 14.6c-.6-1 .6-2 1.5-1.3L7 16"/>
</svg>
<div class="abs" style="left:1805px;top:926px;width:51px;height:51px;border-radius:50%;background:#0f70d7"></div>
<svg class="abs" style="left:1819px;top:941px" width="22" height="20" viewBox="0 0 22 20" fill="none" stroke="#fff" stroke-width="1.5">
  <rect x="2.5" y="2.5" width="17" height="12"/><path d="M11 14.5v3M6.5 17.5h9"/>
</svg>

<svg class="abs" style="left:484px;top:47px" width="16" height="24" viewBox="0 0 16 24"><path d="M2 2V19l3.5-3 3 5 2.6-1.5-2.2-4.8 4.8-1z" fill="#000" stroke="#fff" stroke-width="1.2" stroke-linejoin="round"/></svg>
<div class="abs" style="left:1850px;top:275px;width:11px;height:28px;background:#121a24"></div>
<svg class="abs" style="left:1855px;top:280px" width="6" height="18" viewBox="0 0 6 18" fill="none" stroke="#fff" stroke-width="1.8"><path d="M1 5V1h4M1 1l5 5M1 13v4h4M1 17l5-5"/></svg>
</body></html>
